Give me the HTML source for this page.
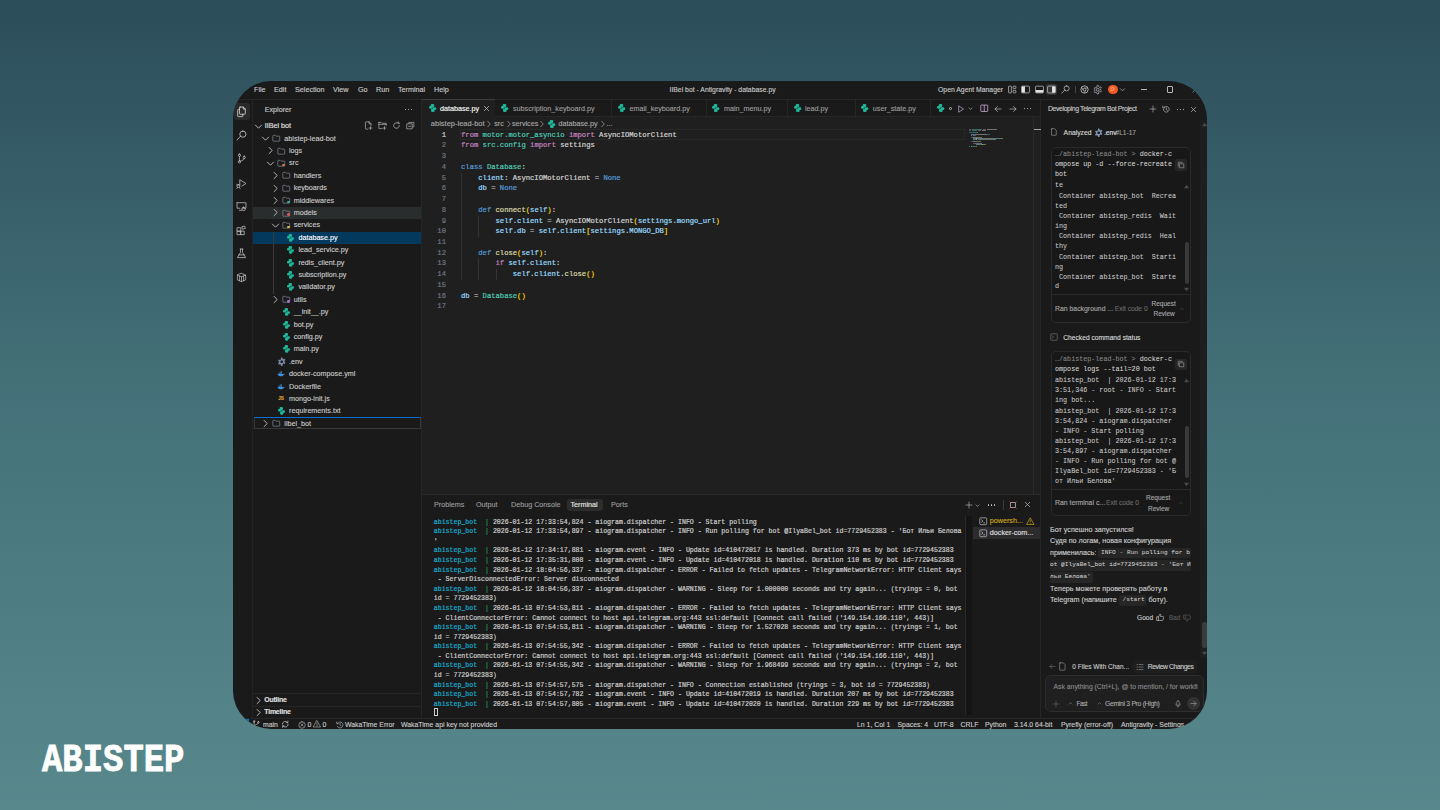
<!DOCTYPE html><html><head><meta charset="utf-8"><style>
*{margin:0;padding:0;box-sizing:border-box}
html,body{width:1440px;height:810px;overflow:hidden}
body{background:linear-gradient(180deg,#2b4d5a 0%,#45727a 50%,#58888c 100%);position:relative;font-family:"Liberation Sans", sans-serif}
.win{position:absolute;left:0;top:0;width:1440px;height:810px;clip-path:inset(81px 233px 81px 233px round 38px);}
.s{position:absolute;white-space:pre;font-family:"Liberation Sans", sans-serif;-webkit-text-stroke:0.12px currentColor}
.m{position:absolute;white-space:pre;font-family:"Liberation Mono", monospace;-webkit-text-stroke:0.2px currentColor}
.r{position:absolute}
svg.i{position:absolute;overflow:visible}
</style></head><body>
<div class="win">
<div class="r" style="left:233px;top:81px;width:974px;height:648px;background:#1a1a1a;"></div>
<div class="r" style="left:422px;top:116px;width:618px;height:378px;background:#1f1f1f;"></div>
<div class="r" style="left:422px;top:99px;width:73px;height:17px;background:#1f1f1f;"></div>
<div class="r" style="left:233px;top:99px;width:974px;height:1px;background:#262626;"></div>
<div class="r" style="left:422px;top:99px;width:72.6px;height:1px;background:#3d3d3d;"></div>
<div class="r" style="left:495px;top:116px;width:545px;height:1px;background:#262626;"></div>
<div class="r" style="left:252px;top:99px;width:1px;height:619px;background:#232323;"></div>
<div class="r" style="left:421px;top:99px;width:1px;height:619px;background:#262626;"></div>
<div class="r" style="left:1040px;top:99px;width:1px;height:619px;background:#262626;"></div>
<div class="r" style="left:422px;top:494px;width:618px;height:1px;background:#2a2a2a;"></div>
<div class="r" style="left:233px;top:718px;width:974px;height:1px;background:#262626;"></div>
<div class="s" style="left:254px;top:83.60px;font-size:7.2px;line-height:12px;color:#cccccc;">File</div>
<div class="s" style="left:274px;top:83.60px;font-size:7.2px;line-height:12px;color:#cccccc;">Edit</div>
<div class="s" style="left:295px;top:83.60px;font-size:7.2px;line-height:12px;color:#cccccc;">Selection</div>
<div class="s" style="left:333px;top:83.60px;font-size:7.2px;line-height:12px;color:#cccccc;">View</div>
<div class="s" style="left:358px;top:83.60px;font-size:7.2px;line-height:12px;color:#cccccc;">Go</div>
<div class="s" style="left:376px;top:83.60px;font-size:7.2px;line-height:12px;color:#cccccc;">Run</div>
<div class="s" style="left:398px;top:83.60px;font-size:7.2px;line-height:12px;color:#cccccc;">Terminal</div>
<div class="s" style="left:434px;top:83.60px;font-size:7.2px;line-height:12px;color:#cccccc;">Help</div>
<div class="s" style="left:669.5px;top:83.60px;font-size:6.85px;line-height:12px;color:#cccccc;">IIBel bot - Antigravity - database.py</div>
<div class="s" style="left:938px;top:83.60px;font-size:6.85px;line-height:12px;color:#cccccc;">Open Agent Manager</div>
<svg class="i" style="left:1007.5px;top:84.9px;" width="9" height="9" viewBox="0 0 16 16"><rect x="1" y="2" width="5" height="12" rx="1" fill="none" stroke="#c5c5c5" stroke-width="1.3"/><rect x="9" y="2" width="5" height="4.5" rx="1" fill="none" stroke="#c5c5c5" stroke-width="1.3"/><rect x="9" y="9.5" width="5" height="4.5" rx="1" fill="none" stroke="#c5c5c5" stroke-width="1.3"/></svg>
<svg class="i" style="left:1020.8px;top:85.2px;" width="9" height="9" viewBox="0 0 16 16"><rect x="1" y="2" width="14" height="12" rx="1.5" fill="none" stroke="#c5c5c5" stroke-width="1.3"/><rect x="1.5" y="2.5" width="5.5" height="11" fill="#e5e5e5"/></svg>
<svg class="i" style="left:1034.5px;top:85.2px;" width="9" height="9" viewBox="0 0 16 16"><rect x="1" y="2" width="14" height="12" rx="1.5" fill="none" stroke="#c5c5c5" stroke-width="1.3"/><rect x="1.5" y="9" width="13" height="4.5" fill="#e5e5e5"/></svg>
<div class="r" style="left:1046px;top:83.5px;width:11px;height:11.5px;background:#333333;border-radius:2px"></div>
<svg class="i" style="left:1047.0px;top:85.2px;" width="9" height="9" viewBox="0 0 16 16"><rect x="1" y="2" width="14" height="12" rx="1.5" fill="none" stroke="#c5c5c5" stroke-width="1.3"/><rect x="9" y="2.5" width="5.5" height="11" fill="#e5e5e5"/></svg>
<svg class="i" style="left:1061.2px;top:85.0px;" width="9" height="9" viewBox="0 0 16 16"><path d="M10 1.5a4.5 4.5 0 1 1 0 9a4.5 4.5 0 1 1 0-9zM6.8 8.8L1.5 14.5" fill="none" stroke="#c5c5c5" stroke-width="1.3" stroke-linecap="round" stroke-linejoin="round" /></svg>
<div class="r" style="left:1075.3px;top:86px;width:0.8px;height:7px;background:#444;"></div>
<svg class="i" style="left:1079.5px;top:84.8px;" width="9" height="9" viewBox="0 0 16 16"><circle cx="8" cy="8" r="6.5" fill="none" stroke="#c5c5c5" stroke-width="1.4"/><circle cx="8" cy="8" r="2.6" fill="none" stroke="#c5c5c5" stroke-width="1.3"/><path d="M8 5.4h6M5.8 9.3L2.8 4M10.2 9.3L7 14.4" stroke="#c5c5c5" stroke-width="1.2"/></svg>
<svg class="i" style="left:1092.75px;top:84.55px;" width="9.5" height="9.5" viewBox="0 0 16 16"><circle cx="8" cy="8" r="2.4" fill="none" stroke="#b5b5c5" stroke-width="1.3"/><path d="M6.8 1h2.4l.4 1.9 1.6.9 1.8-.7 1.2 2.1-1.4 1.3v1.9l1.4 1.3-1.2 2.1-1.8-.7-1.6.9L9.2 15H6.8l-.4-1.9-1.6-.9-1.8.7-1.2-2.1 1.4-1.3V7.6L1.8 6.3 3 4.2l1.8.7 1.6-.9z" fill="none" stroke="#b5b5c5" stroke-width="1.2"/></svg>
<div class="r" style="left:1108px;top:84.6px;width:9.5px;height:9.5px;border-radius:50%;background:#f05a22"></div>
<svg class="i" style="left:1110.3px;top:86.9px;" width="5" height="5" viewBox="0 0 16 16"><path d="M3 6a5 5 0 1 1 5 5H3" fill="none" stroke="#ffd0b8" stroke-width="2" stroke-linecap="round" stroke-linejoin="round" /></svg>
<svg class="i" style="left:1118.8px;top:86.1px;" width="7" height="7" viewBox="0 0 16 16"><path d="M3 6l5 5l5-5" fill="none" stroke="#c5c5c5" stroke-width="1.4" stroke-linecap="round" stroke-linejoin="round" /></svg>
<div class="r" style="left:1140.8px;top:89px;width:6.2px;height:0.9px;background:#b8b8b8;"></div>
<div class="r" style="left:1167px;top:86.4px;width:6px;height:6.2px;background:transparent;border:0.9px solid #b8b8b8;border-radius:1px"></div>
<svg class="i" style="left:1191.5px;top:86.0px;" width="7" height="7" viewBox="0 0 16 16"><path d="M2 2l12 12M14 2L2 14" fill="none" stroke="#c5c5c5" stroke-width="1.3" stroke-linecap="round" stroke-linejoin="round" /></svg>
<div class="r" style="left:233.9px;top:103.2px;width:16px;height:16.6px;background:#2a2a2a;border-radius:3px"></div>
<svg class="i" style="left:236.0px;top:106.0px;" width="11" height="11" viewBox="0 0 16 16"><path d="M6 1.5h4.5l3 3V11a1 1 0 0 1-1 1H6a1 1 0 0 1-1-1V2.5a1 1 0 0 1 1-1zM10.5 1.5v3h3M5 5H3.5a1 1 0 0 0-1 1v8.5a1 1 0 0 0 1 1H9a1 1 0 0 0 1-1V12" fill="none" stroke="#d8d8d8" stroke-width="1.2" stroke-linecap="round" stroke-linejoin="round" /></svg>
<svg class="i" style="left:236.0px;top:129.5px;" width="11" height="11" viewBox="0 0 16 16"><path d="M10 1.5a4.5 4.5 0 1 1 0 9a4.5 4.5 0 1 1 0-9zM6.8 8.8L1.5 14.5" fill="none" stroke="#c5c5c5" stroke-width="1.2" stroke-linecap="round" stroke-linejoin="round" /></svg>
<svg class="i" style="left:236.0px;top:153.1px;" width="11" height="11" viewBox="0 0 16 16"><path d="M5 1.5a1.7 1.7 0 1 1 0 3.4a1.7 1.7 0 1 1 0-3.4zM5 11.1a1.7 1.7 0 1 1 0 3.4a1.7 1.7 0 1 1 0-3.4zM12 4.6a1.7 1.7 0 1 1 0 3.4a1.7 1.7 0 1 1 0-3.4zM5 4.9v6.2M12 8c0 2.5-3 2.5-6.2 4" fill="none" stroke="#c5c5c5" stroke-width="1.1" stroke-linecap="round" stroke-linejoin="round" /></svg>
<svg class="i" style="left:236.0px;top:177.5px;" width="11" height="11" viewBox="0 0 16 16"><path d="M5.5 8.5V2.5l9 5.5l-6 3.7M3.5 9.5a2.2 2.2 0 1 1 0 4.4a2.2 2.2 0 1 1 0-4.4zM1 9l1.2 1.2M6 9L4.8 10.2M1 15l1.2-.8M6 15l-1.2-.8" fill="none" stroke="#c5c5c5" stroke-width="1.1" stroke-linecap="round" stroke-linejoin="round" /></svg>
<svg class="i" style="left:236.0px;top:201.2px;" width="11" height="11" viewBox="0 0 16 16"><path d="M1.5 2.5h13v8h-5M1.5 2.5v8h4M5 13.5h3M11 9a2.5 2.5 0 1 1 0 5a2.5 2.5 0 1 1 0-5z" fill="none" stroke="#c5c5c5" stroke-width="1.1" stroke-linecap="round" stroke-linejoin="round" /></svg>
<svg class="i" style="left:236.0px;top:224.7px;" width="11" height="11" viewBox="0 0 16 16"><path d="M2 4h5v5H2zM2 9h5v5H2zM7 9h5v5H7zM9 2.5l3.5-1 1 3.5-3.5 1z" fill="none" stroke="#c5c5c5" stroke-width="1.1" stroke-linecap="round" stroke-linejoin="round" /></svg>
<svg class="i" style="left:236.0px;top:248.1px;" width="11" height="11" viewBox="0 0 16 16"><path d="M6 1.5h4M6.5 1.5v5L2 14h12l-4.5-7.5v-5M4 10h8" fill="none" stroke="#c5c5c5" stroke-width="1.1" stroke-linecap="round" stroke-linejoin="round" /></svg>
<svg class="i" style="left:236.0px;top:271.5px;" width="11" height="11" viewBox="0 0 16 16"><path d="M8 2l6 2.5v7L8 14l-6-2.5v-7zM2 4.5L8 7l6-2.5M8 7v7M5 5.8v6.8M11 5.8v6.8" fill="none" stroke="#c5c5c5" stroke-width="1.0" stroke-linecap="round" stroke-linejoin="round" /></svg>
<div class="s" style="left:264.7px;top:103.60px;font-size:7.2px;line-height:12px;color:#cccccc;">Explorer</div>
<div class="r" style="left:404.5px;top:108.6px;width:1.4px;height:1.4px;border-radius:50%;background:#cccccc"></div>
<div class="r" style="left:407.7px;top:108.6px;width:1.4px;height:1.4px;border-radius:50%;background:#cccccc"></div>
<div class="r" style="left:410.9px;top:108.6px;width:1.4px;height:1.4px;border-radius:50%;background:#cccccc"></div>
<div class="r" style="left:253px;top:206.89999999999998px;width:168px;height:12.1px;background:#2a2d2e;"></div>
<div class="r" style="left:253px;top:231.7px;width:168px;height:12.1px;background:#04395e;"></div>
<div class="r" style="left:253.5px;top:417px;width:167.8px;height:12.3px;background:transparent;border:1px solid #383838;border-top:1.3px solid #0a6fd0"></div>
<div class="r" style="left:272.7px;top:231.5px;width:0.8px;height:62.2px;background:#3a3a3a;"></div>
<svg class="i" style="left:254.3px;top:121.8px;" width="9" height="9" viewBox="0 0 16 16"><path d="M2.5 5.5l5.5 5.5l5.5-5.5" fill="none" stroke="#c5c5c5" stroke-width="1.6" stroke-linecap="round" stroke-linejoin="round" /></svg>
<div class="s" style="left:264.7px;top:120.10px;font-size:7.2px;line-height:12px;color:#e0e0e0;-webkit-text-stroke:0.15px #e0e0e0">IIBel bot</div>
<svg class="i" style="left:261.2px;top:134.2px;" width="9" height="9" viewBox="0 0 16 16"><path d="M2.5 5.5l5.5 5.5l5.5-5.5" fill="none" stroke="#c5c5c5" stroke-width="1.6" stroke-linecap="round" stroke-linejoin="round" /></svg>
<svg class="i" style="left:272.45px;top:134.25px;" width="8.5" height="8.5" viewBox="0 0 16 16"><path d="M1.5 3.5a1 1 0 0 1 1-1h3.5l1.5 1.5h6a1 1 0 0 1 1 1v7.5a1 1 0 0 1-1 1h-11a1 1 0 0 1-1-1z" fill="none" stroke="#8f96a3" stroke-width="1.2" stroke-linecap="round" stroke-linejoin="round" /></svg>
<div class="s" style="left:284.3px;top:132.50px;font-size:7.2px;line-height:12px;color:#cccccc;">abistep-lead-bot</div>
<svg class="i" style="left:265.9px;top:146.4px;" width="9" height="9" viewBox="0 0 16 16"><path d="M5.5 2.5l5.5 5.5l-5.5 5.5" fill="none" stroke="#c5c5c5" stroke-width="1.6" stroke-linecap="round" stroke-linejoin="round" /></svg>
<svg class="i" style="left:277.15px;top:146.65px;" width="8.5" height="8.5" viewBox="0 0 16 16"><path d="M1.5 3.5a1 1 0 0 1 1-1h3.5l1.5 1.5h6a1 1 0 0 1 1 1v7.5a1 1 0 0 1-1 1h-11a1 1 0 0 1-1-1z" fill="none" stroke="#8f96a3" stroke-width="1.2" stroke-linecap="round" stroke-linejoin="round" /></svg>
<div class="s" style="left:289.0px;top:144.90px;font-size:7.2px;line-height:12px;color:#cccccc;">logs</div>
<svg class="i" style="left:265.9px;top:159.0px;" width="9" height="9" viewBox="0 0 16 16"><path d="M2.5 5.5l5.5 5.5l5.5-5.5" fill="none" stroke="#c5c5c5" stroke-width="1.6" stroke-linecap="round" stroke-linejoin="round" /></svg>
<svg class="i" style="left:277.15px;top:159.05px;" width="8.5" height="8.5" viewBox="0 0 16 16"><path d="M1.5 3.5a1 1 0 0 1 1-1h3.5l1.5 1.5h6a1 1 0 0 1 1 1v7.5a1 1 0 0 1-1 1h-11a1 1 0 0 1-1-1z" fill="none" stroke="#8f96a3" stroke-width="1.2" stroke-linecap="round" stroke-linejoin="round" /></svg>
<div class="r" style="left:282.4px;top:163.5px;width:2.8px;height:2.8px;border-radius:50%;background:#e06c3c"></div>
<div class="s" style="left:289.0px;top:157.30px;font-size:7.2px;line-height:12px;color:#cccccc;">src</div>
<svg class="i" style="left:270.6px;top:171.2px;" width="9" height="9" viewBox="0 0 16 16"><path d="M5.5 2.5l5.5 5.5l-5.5 5.5" fill="none" stroke="#c5c5c5" stroke-width="1.6" stroke-linecap="round" stroke-linejoin="round" /></svg>
<svg class="i" style="left:281.85px;top:171.45px;" width="8.5" height="8.5" viewBox="0 0 16 16"><path d="M1.5 3.5a1 1 0 0 1 1-1h3.5l1.5 1.5h6a1 1 0 0 1 1 1v7.5a1 1 0 0 1-1 1h-11a1 1 0 0 1-1-1z" fill="none" stroke="#8f96a3" stroke-width="1.2" stroke-linecap="round" stroke-linejoin="round" /></svg>
<div class="s" style="left:293.70000000000005px;top:169.70px;font-size:7.2px;line-height:12px;color:#cccccc;">handlers</div>
<svg class="i" style="left:270.6px;top:183.6px;" width="9" height="9" viewBox="0 0 16 16"><path d="M5.5 2.5l5.5 5.5l-5.5 5.5" fill="none" stroke="#c5c5c5" stroke-width="1.6" stroke-linecap="round" stroke-linejoin="round" /></svg>
<svg class="i" style="left:281.85px;top:183.85px;" width="8.5" height="8.5" viewBox="0 0 16 16"><path d="M1.5 3.5a1 1 0 0 1 1-1h3.5l1.5 1.5h6a1 1 0 0 1 1 1v7.5a1 1 0 0 1-1 1h-11a1 1 0 0 1-1-1z" fill="none" stroke="#8f96a3" stroke-width="1.2" stroke-linecap="round" stroke-linejoin="round" /></svg>
<div class="s" style="left:293.70000000000005px;top:182.10px;font-size:7.2px;line-height:12px;color:#cccccc;">keyboards</div>
<svg class="i" style="left:270.6px;top:196.0px;" width="9" height="9" viewBox="0 0 16 16"><path d="M5.5 2.5l5.5 5.5l-5.5 5.5" fill="none" stroke="#c5c5c5" stroke-width="1.6" stroke-linecap="round" stroke-linejoin="round" /></svg>
<svg class="i" style="left:281.85px;top:196.25px;" width="8.5" height="8.5" viewBox="0 0 16 16"><path d="M1.5 3.5a1 1 0 0 1 1-1h3.5l1.5 1.5h6a1 1 0 0 1 1 1v7.5a1 1 0 0 1-1 1h-11a1 1 0 0 1-1-1z" fill="none" stroke="#8f96a3" stroke-width="1.2" stroke-linecap="round" stroke-linejoin="round" /></svg>
<div class="r" style="left:287.1px;top:200.7px;width:2.8px;height:2.8px;border-radius:50%;background:#2bb5a0"></div>
<div class="s" style="left:293.70000000000005px;top:194.50px;font-size:7.2px;line-height:12px;color:#cccccc;">middlewares</div>
<svg class="i" style="left:270.6px;top:208.39999999999998px;" width="9" height="9" viewBox="0 0 16 16"><path d="M5.5 2.5l5.5 5.5l-5.5 5.5" fill="none" stroke="#c5c5c5" stroke-width="1.6" stroke-linecap="round" stroke-linejoin="round" /></svg>
<svg class="i" style="left:281.85px;top:208.64999999999998px;" width="8.5" height="8.5" viewBox="0 0 16 16"><path d="M1.5 3.5a1 1 0 0 1 1-1h3.5l1.5 1.5h6a1 1 0 0 1 1 1v7.5a1 1 0 0 1-1 1h-11a1 1 0 0 1-1-1z" fill="none" stroke="#8f96a3" stroke-width="1.2" stroke-linecap="round" stroke-linejoin="round" /></svg>
<div class="r" style="left:287.1px;top:213.09999999999997px;width:2.8px;height:2.8px;border-radius:50%;background:#e05252"></div>
<div class="s" style="left:293.70000000000005px;top:206.90px;font-size:7.2px;line-height:12px;color:#cccccc;">models</div>
<svg class="i" style="left:270.6px;top:221.0px;" width="9" height="9" viewBox="0 0 16 16"><path d="M2.5 5.5l5.5 5.5l5.5-5.5" fill="none" stroke="#c5c5c5" stroke-width="1.6" stroke-linecap="round" stroke-linejoin="round" /></svg>
<svg class="i" style="left:281.85px;top:221.05px;" width="8.5" height="8.5" viewBox="0 0 16 16"><path d="M1.5 3.5a1 1 0 0 1 1-1h3.5l1.5 1.5h6a1 1 0 0 1 1 1v7.5a1 1 0 0 1-1 1h-11a1 1 0 0 1-1-1z" fill="none" stroke="#8f96a3" stroke-width="1.2" stroke-linecap="round" stroke-linejoin="round" /></svg>
<div class="r" style="left:287.1px;top:225.5px;width:2.8px;height:2.8px;border-radius:50%;background:#e8b43a"></div>
<div class="s" style="left:293.70000000000005px;top:219.30px;font-size:7.2px;line-height:12px;color:#cccccc;">services</div>
<svg class="i" style="left:287.3px;top:233.85px;" width="7" height="7.700000000000001" viewBox="0 0 10 11"><g fill="#20b598"><rect x="2.3" y="0" width="4.9" height="4.4" rx="1.6"/><rect x="0" y="2.8" width="4.9" height="3.6" rx="1.5"/><rect x="2.3" y="2.8" width="2.6" height="1.6"/><rect x="5.1" y="4.6" width="4.9" height="3.6" rx="1.5"/><rect x="2.8" y="6.6" width="4.9" height="4.4" rx="1.6"/><rect x="5.1" y="6.6" width="2.6" height="1.6"/></g></svg>
<div class="s" style="left:298.40000000000003px;top:231.70px;font-size:7.2px;line-height:12px;color:#ffffff;">database.py</div>
<svg class="i" style="left:287.3px;top:246.25px;" width="7" height="7.700000000000001" viewBox="0 0 10 11"><g fill="#20b598"><rect x="2.3" y="0" width="4.9" height="4.4" rx="1.6"/><rect x="0" y="2.8" width="4.9" height="3.6" rx="1.5"/><rect x="2.3" y="2.8" width="2.6" height="1.6"/><rect x="5.1" y="4.6" width="4.9" height="3.6" rx="1.5"/><rect x="2.8" y="6.6" width="4.9" height="4.4" rx="1.6"/><rect x="5.1" y="6.6" width="2.6" height="1.6"/></g></svg>
<div class="s" style="left:298.40000000000003px;top:244.10px;font-size:7.2px;line-height:12px;color:#cccccc;">lead_service.py</div>
<svg class="i" style="left:287.3px;top:258.65px;" width="7" height="7.700000000000001" viewBox="0 0 10 11"><g fill="#20b598"><rect x="2.3" y="0" width="4.9" height="4.4" rx="1.6"/><rect x="0" y="2.8" width="4.9" height="3.6" rx="1.5"/><rect x="2.3" y="2.8" width="2.6" height="1.6"/><rect x="5.1" y="4.6" width="4.9" height="3.6" rx="1.5"/><rect x="2.8" y="6.6" width="4.9" height="4.4" rx="1.6"/><rect x="5.1" y="6.6" width="2.6" height="1.6"/></g></svg>
<div class="s" style="left:298.40000000000003px;top:256.50px;font-size:7.2px;line-height:12px;color:#cccccc;">redis_client.py</div>
<svg class="i" style="left:287.3px;top:271.04999999999995px;" width="7" height="7.700000000000001" viewBox="0 0 10 11"><g fill="#20b598"><rect x="2.3" y="0" width="4.9" height="4.4" rx="1.6"/><rect x="0" y="2.8" width="4.9" height="3.6" rx="1.5"/><rect x="2.3" y="2.8" width="2.6" height="1.6"/><rect x="5.1" y="4.6" width="4.9" height="3.6" rx="1.5"/><rect x="2.8" y="6.6" width="4.9" height="4.4" rx="1.6"/><rect x="5.1" y="6.6" width="2.6" height="1.6"/></g></svg>
<div class="s" style="left:298.40000000000003px;top:268.90px;font-size:7.2px;line-height:12px;color:#cccccc;">subscription.py</div>
<svg class="i" style="left:287.3px;top:283.45px;" width="7" height="7.700000000000001" viewBox="0 0 10 11"><g fill="#20b598"><rect x="2.3" y="0" width="4.9" height="4.4" rx="1.6"/><rect x="0" y="2.8" width="4.9" height="3.6" rx="1.5"/><rect x="2.3" y="2.8" width="2.6" height="1.6"/><rect x="5.1" y="4.6" width="4.9" height="3.6" rx="1.5"/><rect x="2.8" y="6.6" width="4.9" height="4.4" rx="1.6"/><rect x="5.1" y="6.6" width="2.6" height="1.6"/></g></svg>
<div class="s" style="left:298.40000000000003px;top:281.30px;font-size:7.2px;line-height:12px;color:#cccccc;">validator.py</div>
<svg class="i" style="left:270.6px;top:295.2px;" width="9" height="9" viewBox="0 0 16 16"><path d="M5.5 2.5l5.5 5.5l-5.5 5.5" fill="none" stroke="#c5c5c5" stroke-width="1.6" stroke-linecap="round" stroke-linejoin="round" /></svg>
<svg class="i" style="left:281.85px;top:295.45px;" width="8.5" height="8.5" viewBox="0 0 16 16"><path d="M1.5 3.5a1 1 0 0 1 1-1h3.5l1.5 1.5h6a1 1 0 0 1 1 1v7.5a1 1 0 0 1-1 1h-11a1 1 0 0 1-1-1z" fill="none" stroke="#8f96a3" stroke-width="1.2" stroke-linecap="round" stroke-linejoin="round" /></svg>
<div class="r" style="left:287.1px;top:299.9px;width:2.8px;height:2.8px;border-radius:50%;background:#b36ad9"></div>
<div class="s" style="left:293.70000000000005px;top:293.70px;font-size:7.2px;line-height:12px;color:#cccccc;">utils</div>
<svg class="i" style="left:282.6px;top:308.25px;" width="7" height="7.700000000000001" viewBox="0 0 10 11"><g fill="#20b598"><rect x="2.3" y="0" width="4.9" height="4.4" rx="1.6"/><rect x="0" y="2.8" width="4.9" height="3.6" rx="1.5"/><rect x="2.3" y="2.8" width="2.6" height="1.6"/><rect x="5.1" y="4.6" width="4.9" height="3.6" rx="1.5"/><rect x="2.8" y="6.6" width="4.9" height="4.4" rx="1.6"/><rect x="5.1" y="6.6" width="2.6" height="1.6"/></g></svg>
<div class="s" style="left:293.70000000000005px;top:306.10px;font-size:7.2px;line-height:12px;color:#cccccc;">__init__.py</div>
<svg class="i" style="left:282.6px;top:320.65px;" width="7" height="7.700000000000001" viewBox="0 0 10 11"><g fill="#20b598"><rect x="2.3" y="0" width="4.9" height="4.4" rx="1.6"/><rect x="0" y="2.8" width="4.9" height="3.6" rx="1.5"/><rect x="2.3" y="2.8" width="2.6" height="1.6"/><rect x="5.1" y="4.6" width="4.9" height="3.6" rx="1.5"/><rect x="2.8" y="6.6" width="4.9" height="4.4" rx="1.6"/><rect x="5.1" y="6.6" width="2.6" height="1.6"/></g></svg>
<div class="s" style="left:293.70000000000005px;top:318.50px;font-size:7.2px;line-height:12px;color:#cccccc;">bot.py</div>
<svg class="i" style="left:282.6px;top:333.04999999999995px;" width="7" height="7.700000000000001" viewBox="0 0 10 11"><g fill="#20b598"><rect x="2.3" y="0" width="4.9" height="4.4" rx="1.6"/><rect x="0" y="2.8" width="4.9" height="3.6" rx="1.5"/><rect x="2.3" y="2.8" width="2.6" height="1.6"/><rect x="5.1" y="4.6" width="4.9" height="3.6" rx="1.5"/><rect x="2.8" y="6.6" width="4.9" height="4.4" rx="1.6"/><rect x="5.1" y="6.6" width="2.6" height="1.6"/></g></svg>
<div class="s" style="left:293.70000000000005px;top:330.90px;font-size:7.2px;line-height:12px;color:#cccccc;">config.py</div>
<svg class="i" style="left:282.6px;top:345.45px;" width="7" height="7.700000000000001" viewBox="0 0 10 11"><g fill="#20b598"><rect x="2.3" y="0" width="4.9" height="4.4" rx="1.6"/><rect x="0" y="2.8" width="4.9" height="3.6" rx="1.5"/><rect x="2.3" y="2.8" width="2.6" height="1.6"/><rect x="5.1" y="4.6" width="4.9" height="3.6" rx="1.5"/><rect x="2.8" y="6.6" width="4.9" height="4.4" rx="1.6"/><rect x="5.1" y="6.6" width="2.6" height="1.6"/></g></svg>
<div class="s" style="left:293.70000000000005px;top:343.30px;font-size:7.2px;line-height:12px;color:#cccccc;">main.py</div>
<svg class="i" style="left:276.65px;top:356.95px;" width="9.5" height="9.5" viewBox="0 0 16 16"><circle cx="8" cy="8" r="2.5" fill="#1a1a1a"/><path d="M6.8 1h2.4l.4 1.9 1.6.9 1.8-.7 1.2 2.1-1.4 1.3v1.9l1.4 1.3-1.2 2.1-1.8-.7-1.6.9L9.2 15H6.8l-.4-1.9-1.6-.9-1.8.7-1.2-2.1 1.4-1.3V7.6L1.8 6.3 3 4.2l1.8.7 1.6-.9z" fill="#7c8aa5"/><circle cx="8" cy="8" r="2.3" fill="#1a1a1a"/></svg>
<div class="s" style="left:289.0px;top:355.70px;font-size:7.2px;line-height:12px;color:#cccccc;">.env</div>
<svg class="i" style="left:277.4px;top:370.1px;" width="8" height="8" viewBox="0 0 16 16"><path d="M1 8h12.5c.6-1 1.3-1.3 1.8-1.2-.3 1.3-1 2.4-2 3.1C12 11.6 9.5 12.8 6 12.3 3.2 11.9 1.6 10.3 1 8z" fill="#3d8fe0"/><path d="M3 5.5h2v2H3zM5.5 5.5h2v2h-2zM8 5.5h2v2H8zM5.5 3h2v2h-2zM8 3h2v2H8z" fill="#3d8fe0"/></svg>
<div class="s" style="left:289.0px;top:368.10px;font-size:7.2px;line-height:12px;color:#cccccc;">docker-compose.yml</div>
<svg class="i" style="left:277.4px;top:382.5px;" width="8" height="8" viewBox="0 0 16 16"><path d="M1 8h12.5c.6-1 1.3-1.3 1.8-1.2-.3 1.3-1 2.4-2 3.1C12 11.6 9.5 12.8 6 12.3 3.2 11.9 1.6 10.3 1 8z" fill="#3d8fe0"/><path d="M3 5.5h2v2H3zM5.5 5.5h2v2h-2zM8 5.5h2v2H8zM5.5 3h2v2h-2zM8 3h2v2H8z" fill="#3d8fe0"/></svg>
<div class="s" style="left:289.0px;top:380.50px;font-size:7.2px;line-height:12px;color:#cccccc;">Dockerfile</div>
<div class="s" style="left:278.2px;top:392.90px;font-size:4.6px;line-height:12px;color:#e0a530;font-weight:bold">JS</div>
<div class="s" style="left:289.0px;top:392.90px;font-size:7.2px;line-height:12px;color:#cccccc;">mongo-init.js</div>
<svg class="i" style="left:277.9px;top:407.44999999999993px;" width="7" height="7.700000000000001" viewBox="0 0 10 11"><g fill="#20b598"><rect x="2.3" y="0" width="4.9" height="4.4" rx="1.6"/><rect x="0" y="2.8" width="4.9" height="3.6" rx="1.5"/><rect x="2.3" y="2.8" width="2.6" height="1.6"/><rect x="5.1" y="4.6" width="4.9" height="3.6" rx="1.5"/><rect x="2.8" y="6.6" width="4.9" height="4.4" rx="1.6"/><rect x="5.1" y="6.6" width="2.6" height="1.6"/></g></svg>
<div class="s" style="left:289.0px;top:405.30px;font-size:7.2px;line-height:12px;color:#cccccc;">requirements.txt</div>
<svg class="i" style="left:261.2px;top:419.20000000000005px;" width="9" height="9" viewBox="0 0 16 16"><path d="M5.5 2.5l5.5 5.5l-5.5 5.5" fill="none" stroke="#c5c5c5" stroke-width="1.6" stroke-linecap="round" stroke-linejoin="round" /></svg>
<svg class="i" style="left:272.45px;top:419.45000000000005px;" width="8.5" height="8.5" viewBox="0 0 16 16"><path d="M1.5 3.5a1 1 0 0 1 1-1h3.5l1.5 1.5h6a1 1 0 0 1 1 1v7.5a1 1 0 0 1-1 1h-11a1 1 0 0 1-1-1z" fill="none" stroke="#8f96a3" stroke-width="1.2" stroke-linecap="round" stroke-linejoin="round" /></svg>
<div class="s" style="left:284.3px;top:417.70px;font-size:7.2px;line-height:12px;color:#cccccc;">ilbel_bot</div>
<svg class="i" style="left:364.0px;top:120.8px;" width="9" height="9" viewBox="0 0 16 16"><path d="M9 1.5H3.5a1 1 0 0 0-1 1v11a1 1 0 0 0 1 1H7M9 1.5l3.5 3.5V8M9 1.5V5h3.5M11.5 10v5M9 12.5h5" fill="none" stroke="#c5c5c5" stroke-width="1.1" stroke-linecap="round" stroke-linejoin="round" /></svg>
<svg class="i" style="left:378.0px;top:120.8px;" width="9" height="9" viewBox="0 0 16 16"><path d="M1.5 2.5h4l1.5 1.5h7.5v4M1.5 2.5v11h6M1.5 6h13M11.5 10v5M9 12.5h5" fill="none" stroke="#c5c5c5" stroke-width="1.1" stroke-linecap="round" stroke-linejoin="round" /></svg>
<svg class="i" style="left:391.5px;top:120.8px;" width="9" height="9" viewBox="0 0 16 16"><path d="M13 8a5 5 0 1 1-2-4M11 1.5V4h2.5" fill="none" stroke="#c5c5c5" stroke-width="1.2" stroke-linecap="round" stroke-linejoin="round" /></svg>
<svg class="i" style="left:405.5px;top:120.8px;" width="9" height="9" viewBox="0 0 16 16"><path d="M5 4V2.5h9v8h-2M2 5h9v9H2zM4.5 9.5h4" fill="none" stroke="#c5c5c5" stroke-width="1.1" stroke-linecap="round" stroke-linejoin="round" /></svg>
<div class="r" style="left:253px;top:693px;width:168px;height:1px;background:#262626;"></div>
<div class="r" style="left:253px;top:705.5px;width:168px;height:1px;background:#262626;"></div>
<svg class="i" style="left:254.3px;top:695.5px;" width="9" height="9" viewBox="0 0 16 16"><path d="M5.5 2.5l5.5 5.5l-5.5 5.5" fill="none" stroke="#c5c5c5" stroke-width="1.6" stroke-linecap="round" stroke-linejoin="round" /></svg>
<div class="s" style="left:264.3px;top:694.20px;font-size:7.0px;line-height:12px;color:#e0e0e0;font-weight:bold;letter-spacing:-0.25px">Outline</div>
<svg class="i" style="left:254.3px;top:707.5px;" width="9" height="9" viewBox="0 0 16 16"><path d="M5.5 2.5l5.5 5.5l-5.5 5.5" fill="none" stroke="#c5c5c5" stroke-width="1.6" stroke-linecap="round" stroke-linejoin="round" /></svg>
<div class="s" style="left:264.3px;top:706.20px;font-size:7.0px;line-height:12px;color:#e0e0e0;font-weight:bold;letter-spacing:-0.25px">Timeline</div>
<svg class="i" style="left:428.85px;top:104.285px;" width="7.3" height="8.030000000000001" viewBox="0 0 10 11"><g fill="#20b598"><rect x="2.3" y="0" width="4.9" height="4.4" rx="1.6"/><rect x="0" y="2.8" width="4.9" height="3.6" rx="1.5"/><rect x="2.3" y="2.8" width="2.6" height="1.6"/><rect x="5.1" y="4.6" width="4.9" height="3.6" rx="1.5"/><rect x="2.8" y="6.6" width="4.9" height="4.4" rx="1.6"/><rect x="5.1" y="6.6" width="2.6" height="1.6"/></g></svg>
<div class="s" style="left:440px;top:102.80px;font-size:7.2px;line-height:12px;color:#ffffff;">database.py</div>
<svg class="i" style="left:501.15000000000003px;top:104.285px;" width="7.3" height="8.030000000000001" viewBox="0 0 10 11"><g fill="#20b598"><rect x="2.3" y="0" width="4.9" height="4.4" rx="1.6"/><rect x="0" y="2.8" width="4.9" height="3.6" rx="1.5"/><rect x="2.3" y="2.8" width="2.6" height="1.6"/><rect x="5.1" y="4.6" width="4.9" height="3.6" rx="1.5"/><rect x="2.8" y="6.6" width="4.9" height="4.4" rx="1.6"/><rect x="5.1" y="6.6" width="2.6" height="1.6"/></g></svg>
<div class="s" style="left:513px;top:102.80px;font-size:7.2px;line-height:12px;color:#9d9d9d;">subscription_keyboard.py</div>
<svg class="i" style="left:617.85px;top:104.285px;" width="7.3" height="8.030000000000001" viewBox="0 0 10 11"><g fill="#20b598"><rect x="2.3" y="0" width="4.9" height="4.4" rx="1.6"/><rect x="0" y="2.8" width="4.9" height="3.6" rx="1.5"/><rect x="2.3" y="2.8" width="2.6" height="1.6"/><rect x="5.1" y="4.6" width="4.9" height="3.6" rx="1.5"/><rect x="2.8" y="6.6" width="4.9" height="4.4" rx="1.6"/><rect x="5.1" y="6.6" width="2.6" height="1.6"/></g></svg>
<div class="s" style="left:629.5px;top:102.80px;font-size:7.2px;line-height:12px;color:#9d9d9d;">email_keyboard.py</div>
<svg class="i" style="left:712.35px;top:104.285px;" width="7.3" height="8.030000000000001" viewBox="0 0 10 11"><g fill="#20b598"><rect x="2.3" y="0" width="4.9" height="4.4" rx="1.6"/><rect x="0" y="2.8" width="4.9" height="3.6" rx="1.5"/><rect x="2.3" y="2.8" width="2.6" height="1.6"/><rect x="5.1" y="4.6" width="4.9" height="3.6" rx="1.5"/><rect x="2.8" y="6.6" width="4.9" height="4.4" rx="1.6"/><rect x="5.1" y="6.6" width="2.6" height="1.6"/></g></svg>
<div class="s" style="left:724px;top:102.80px;font-size:7.2px;line-height:12px;color:#9d9d9d;">main_menu.py</div>
<svg class="i" style="left:793.95px;top:104.285px;" width="7.3" height="8.030000000000001" viewBox="0 0 10 11"><g fill="#20b598"><rect x="2.3" y="0" width="4.9" height="4.4" rx="1.6"/><rect x="0" y="2.8" width="4.9" height="3.6" rx="1.5"/><rect x="2.3" y="2.8" width="2.6" height="1.6"/><rect x="5.1" y="4.6" width="4.9" height="3.6" rx="1.5"/><rect x="2.8" y="6.6" width="4.9" height="4.4" rx="1.6"/><rect x="5.1" y="6.6" width="2.6" height="1.6"/></g></svg>
<div class="s" style="left:805px;top:102.80px;font-size:7.2px;line-height:12px;color:#9d9d9d;">lead.py</div>
<svg class="i" style="left:861.35px;top:104.285px;" width="7.3" height="8.030000000000001" viewBox="0 0 10 11"><g fill="#20b598"><rect x="2.3" y="0" width="4.9" height="4.4" rx="1.6"/><rect x="0" y="2.8" width="4.9" height="3.6" rx="1.5"/><rect x="2.3" y="2.8" width="2.6" height="1.6"/><rect x="5.1" y="4.6" width="4.9" height="3.6" rx="1.5"/><rect x="2.8" y="6.6" width="4.9" height="4.4" rx="1.6"/><rect x="5.1" y="6.6" width="2.6" height="1.6"/></g></svg>
<div class="s" style="left:872.8px;top:102.80px;font-size:7.2px;line-height:12px;color:#9d9d9d;">user_state.py</div>
<svg class="i" style="left:483.0px;top:104.9px;" width="7" height="7" viewBox="0 0 16 16"><path d="M3 3l10 10M13 3L3 13" fill="none" stroke="#cccccc" stroke-width="1.6" stroke-linecap="round" stroke-linejoin="round" /></svg>
<div class="r" style="left:611px;top:99px;width:1px;height:17px;background:#262626;"></div>
<div class="r" style="left:706px;top:99px;width:1px;height:17px;background:#262626;"></div>
<div class="r" style="left:787.4px;top:99px;width:1px;height:17px;background:#262626;"></div>
<div class="r" style="left:854.7px;top:99px;width:1px;height:17px;background:#262626;"></div>
<div class="r" style="left:930.4px;top:99px;width:1px;height:17px;background:#262626;"></div>
<svg class="i" style="left:936.85px;top:104.285px;" width="7.3" height="8.030000000000001" viewBox="0 0 10 11"><g fill="#20b598"><rect x="2.3" y="0" width="4.9" height="4.4" rx="1.6"/><rect x="0" y="2.8" width="4.9" height="3.6" rx="1.5"/><rect x="2.3" y="2.8" width="2.6" height="1.6"/><rect x="5.1" y="4.6" width="4.9" height="3.6" rx="1.5"/><rect x="2.8" y="6.6" width="4.9" height="4.4" rx="1.6"/><rect x="5.1" y="6.6" width="2.6" height="1.6"/></g></svg>
<div class="r" style="left:948.8px;top:106.6px;width:3.6px;height:3.6px;border-radius:50%;border:0.8px solid #bbbbbb"></div>
<svg class="i" style="left:957.0px;top:104.5px;" width="8" height="8" viewBox="0 0 16 16"><path d="M4 2l9 6l-9 6z" fill="none" stroke="#d0b0e8" stroke-width="1.3" stroke-linecap="round" stroke-linejoin="round" /></svg>
<svg class="i" style="left:967.5px;top:106.0px;" width="5" height="5" viewBox="0 0 16 16"><path d="M3 6l5 5l5-5" fill="none" stroke="#c5c5c5" stroke-width="1.8" stroke-linecap="round" stroke-linejoin="round" /></svg>
<svg class="i" style="left:979.75px;top:104.25px;" width="8.5" height="8.5" viewBox="0 0 16 16"><rect x="1.5" y="2" width="13" height="12" rx="1" fill="none" stroke="#d8b8e0" stroke-width="1.4"/><path d="M8 2v12" stroke="#d8b8e0" stroke-width="1.4"/></svg>
<svg class="i" style="left:994.0px;top:104.5px;" width="8" height="8" viewBox="0 0 16 16"><path d="M14 8H2M7 3L2 8l5 5" fill="none" stroke="#d5d5d5" stroke-width="1.2" stroke-linecap="round" stroke-linejoin="round" /></svg>
<svg class="i" style="left:1008.5px;top:104.5px;" width="8" height="8" viewBox="0 0 16 16"><path d="M2 8h12M9 3l5 5l-5 5" fill="none" stroke="#d5d5d5" stroke-width="1.2" stroke-linecap="round" stroke-linejoin="round" /></svg>
<div class="r" style="left:1023.6px;top:107.9px;width:1.3px;height:1.3px;border-radius:50%;background:#cccccc"></div>
<div class="r" style="left:1026.8px;top:107.9px;width:1.3px;height:1.3px;border-radius:50%;background:#cccccc"></div>
<div class="r" style="left:1030.0px;top:107.9px;width:1.3px;height:1.3px;border-radius:50%;background:#cccccc"></div>
<div class="s" style="left:430.8px;top:118.00px;font-size:7.5px;line-height:12px;color:#a9a9a9;">abistep-lead-bot</div>
<svg class="i" style="left:484.9px;top:120.0px;" width="8" height="8" viewBox="0 0 16 16"><path d="M5.5 2.5l5 5.5l-5 5.5" fill="none" stroke="#a9a9a9" stroke-width="1.4" stroke-linecap="round" stroke-linejoin="round" /></svg>
<div class="s" style="left:494.2px;top:118.00px;font-size:7.2px;line-height:12px;color:#a9a9a9;">src</div>
<svg class="i" style="left:504.6px;top:120.0px;" width="8" height="8" viewBox="0 0 16 16"><path d="M5.5 2.5l5 5.5l-5 5.5" fill="none" stroke="#a9a9a9" stroke-width="1.4" stroke-linecap="round" stroke-linejoin="round" /></svg>
<div class="s" style="left:511.9px;top:118.00px;font-size:7.2px;line-height:12px;color:#a9a9a9;">services</div>
<svg class="i" style="left:538.0px;top:120.0px;" width="8" height="8" viewBox="0 0 16 16"><path d="M5.5 2.5l5 5.5l-5 5.5" fill="none" stroke="#a9a9a9" stroke-width="1.4" stroke-linecap="round" stroke-linejoin="round" /></svg>
<svg class="i" style="left:547.5500000000001px;top:119.685px;" width="7.3" height="8.030000000000001" viewBox="0 0 10 11"><g fill="#20b598"><rect x="2.3" y="0" width="4.9" height="4.4" rx="1.6"/><rect x="0" y="2.8" width="4.9" height="3.6" rx="1.5"/><rect x="2.3" y="2.8" width="2.6" height="1.6"/><rect x="5.1" y="4.6" width="4.9" height="3.6" rx="1.5"/><rect x="2.8" y="6.6" width="4.9" height="4.4" rx="1.6"/><rect x="5.1" y="6.6" width="2.6" height="1.6"/></g></svg>
<div class="s" style="left:558.5px;top:118.00px;font-size:7.2px;line-height:12px;color:#a9a9a9;">database.py</div>
<svg class="i" style="left:599.3px;top:120.0px;" width="8" height="8" viewBox="0 0 16 16"><path d="M5.5 2.5l5 5.5l-5 5.5" fill="none" stroke="#a9a9a9" stroke-width="1.4" stroke-linecap="round" stroke-linejoin="round" /></svg>
<div class="s" style="left:606.6px;top:118.00px;font-size:7.2px;line-height:12px;color:#a9a9a9;">...</div>
<div class="r" style="left:460px;top:129.4px;width:505px;height:10.2px;background:transparent;border:1px solid #282828"></div>
<div class="m" style="left:425px;top:129.74px;font-size:7.2px;line-height:10.72px;color:#cccccc;width:21px;text-align:right">1</div>
<div class="m" style="left:461px;top:129.74px;font-size:7.2px;line-height:10.72px;color:#d4d4d4;"><span style="color:#c586c0">from</span><span style="color:#d4d4d4"> </span><span style="color:#4ec9b0">motor.motor_asyncio</span><span style="color:#d4d4d4"> </span><span style="color:#c586c0">import</span><span style="color:#d4d4d4"> AsyncIOMotorClient</span></div>
<div class="m" style="left:425px;top:140.46px;font-size:7.2px;line-height:10.72px;color:#6e7681;width:21px;text-align:right">2</div>
<div class="m" style="left:461px;top:140.46px;font-size:7.2px;line-height:10.72px;color:#d4d4d4;"><span style="color:#c586c0">from</span><span style="color:#d4d4d4"> </span><span style="color:#4ec9b0">src.config</span><span style="color:#d4d4d4"> </span><span style="color:#c586c0">import</span><span style="color:#d4d4d4"> settings</span></div>
<div class="m" style="left:425px;top:151.18px;font-size:7.2px;line-height:10.72px;color:#6e7681;width:21px;text-align:right">3</div>
<div class="m" style="left:425px;top:161.90px;font-size:7.2px;line-height:10.72px;color:#6e7681;width:21px;text-align:right">4</div>
<div class="m" style="left:461px;top:161.90px;font-size:7.2px;line-height:10.72px;color:#d4d4d4;"><span style="color:#569cd6">class</span><span style="color:#d4d4d4"> </span><span style="color:#4ec9b0">Database</span><span style="color:#d4d4d4">:</span></div>
<div class="m" style="left:425px;top:172.62px;font-size:7.2px;line-height:10.72px;color:#6e7681;width:21px;text-align:right">5</div>
<div class="m" style="left:461px;top:172.62px;font-size:7.2px;line-height:10.72px;color:#d4d4d4;"><span style="color:#9cdcfe">    client</span><span style="color:#d4d4d4">: </span><span style="color:#d4d4d4">AsyncIOMotorClient</span><span style="color:#d4d4d4"> = </span><span style="color:#569cd6">None</span></div>
<div class="m" style="left:425px;top:183.34px;font-size:7.2px;line-height:10.72px;color:#6e7681;width:21px;text-align:right">6</div>
<div class="m" style="left:461px;top:183.34px;font-size:7.2px;line-height:10.72px;color:#d4d4d4;"><span style="color:#9cdcfe">    db</span><span style="color:#d4d4d4"> = </span><span style="color:#569cd6">None</span></div>
<div class="m" style="left:425px;top:194.06px;font-size:7.2px;line-height:10.72px;color:#6e7681;width:21px;text-align:right">7</div>
<div class="m" style="left:425px;top:204.78px;font-size:7.2px;line-height:10.72px;color:#6e7681;width:21px;text-align:right">8</div>
<div class="m" style="left:461px;top:204.78px;font-size:7.2px;line-height:10.72px;color:#d4d4d4;"><span style="color:#569cd6">    def</span><span style="color:#d4d4d4"> </span><span style="color:#dcdcaa">connect</span><span style="color:#ffd700">(</span><span style="color:#9cdcfe">self</span><span style="color:#ffd700">)</span><span style="color:#d4d4d4">:</span></div>
<div class="m" style="left:425px;top:215.50px;font-size:7.2px;line-height:10.72px;color:#6e7681;width:21px;text-align:right">9</div>
<div class="m" style="left:461px;top:215.50px;font-size:7.2px;line-height:10.72px;color:#d4d4d4;"><span style="color:#9cdcfe">        self</span><span style="color:#d4d4d4">.</span><span style="color:#9cdcfe">client</span><span style="color:#d4d4d4"> = </span><span style="color:#d4d4d4">AsyncIOMotorClient</span><span style="color:#ffd700">(</span><span style="color:#9cdcfe">settings</span><span style="color:#d4d4d4">.</span><span style="color:#9cdcfe">mongo_url</span><span style="color:#ffd700">)</span></div>
<div class="m" style="left:425px;top:226.22px;font-size:7.2px;line-height:10.72px;color:#6e7681;width:21px;text-align:right">10</div>
<div class="m" style="left:461px;top:226.22px;font-size:7.2px;line-height:10.72px;color:#d4d4d4;"><span style="color:#9cdcfe">        self</span><span style="color:#d4d4d4">.</span><span style="color:#9cdcfe">db</span><span style="color:#d4d4d4"> = </span><span style="color:#9cdcfe">self</span><span style="color:#d4d4d4">.</span><span style="color:#9cdcfe">client</span><span style="color:#ffd700">[</span><span style="color:#9cdcfe">settings</span><span style="color:#d4d4d4">.</span><span style="color:#9cdcfe">MONGO_DB</span><span style="color:#ffd700">]</span></div>
<div class="m" style="left:425px;top:236.94px;font-size:7.2px;line-height:10.72px;color:#6e7681;width:21px;text-align:right">11</div>
<div class="m" style="left:425px;top:247.66px;font-size:7.2px;line-height:10.72px;color:#6e7681;width:21px;text-align:right">12</div>
<div class="m" style="left:461px;top:247.66px;font-size:7.2px;line-height:10.72px;color:#d4d4d4;"><span style="color:#569cd6">    def</span><span style="color:#d4d4d4"> </span><span style="color:#dcdcaa">close</span><span style="color:#ffd700">(</span><span style="color:#9cdcfe">self</span><span style="color:#ffd700">)</span><span style="color:#d4d4d4">:</span></div>
<div class="m" style="left:425px;top:258.38px;font-size:7.2px;line-height:10.72px;color:#6e7681;width:21px;text-align:right">13</div>
<div class="m" style="left:461px;top:258.38px;font-size:7.2px;line-height:10.72px;color:#d4d4d4;"><span style="color:#c586c0">        if</span><span style="color:#d4d4d4"> </span><span style="color:#9cdcfe">self</span><span style="color:#d4d4d4">.</span><span style="color:#9cdcfe">client</span><span style="color:#d4d4d4">:</span></div>
<div class="m" style="left:425px;top:269.10px;font-size:7.2px;line-height:10.72px;color:#6e7681;width:21px;text-align:right">14</div>
<div class="m" style="left:461px;top:269.10px;font-size:7.2px;line-height:10.72px;color:#d4d4d4;"><span style="color:#9cdcfe">            self</span><span style="color:#d4d4d4">.</span><span style="color:#9cdcfe">client</span><span style="color:#d4d4d4">.</span><span style="color:#dcdcaa">close</span><span style="color:#ffd700">()</span></div>
<div class="m" style="left:425px;top:279.82px;font-size:7.2px;line-height:10.72px;color:#6e7681;width:21px;text-align:right">15</div>
<div class="m" style="left:425px;top:290.54px;font-size:7.2px;line-height:10.72px;color:#6e7681;width:21px;text-align:right">16</div>
<div class="m" style="left:461px;top:290.54px;font-size:7.2px;line-height:10.72px;color:#d4d4d4;"><span style="color:#9cdcfe">db</span><span style="color:#d4d4d4"> = </span><span style="color:#4ec9b0">Database</span><span style="color:#ffd700">()</span></div>
<div class="m" style="left:425px;top:301.26px;font-size:7.2px;line-height:10.72px;color:#6e7681;width:21px;text-align:right">17</div>
<div class="r" style="left:460.6px;top:172.61999999999998px;width:0.8px;height:107.2px;background:#333333;"></div>
<div class="r" style="left:478.3px;top:215.5px;width:0.8px;height:21.44px;background:#333333;"></div>
<div class="r" style="left:478.3px;top:258.38px;width:0.8px;height:21.44px;background:#333333;"></div>
<div class="r" style="left:495.6px;top:269.1px;width:0.8px;height:10.72px;background:#333333;"></div>
<div class="r" style="left:969.0px;top:129.0px;width:2.24px;height:0.95px;background:#c586c0;opacity:0.45"></div>
<div class="r" style="left:971.8px;top:129.0px;width:10.64px;height:0.95px;background:#4ec9b0;opacity:0.45"></div>
<div class="r" style="left:983.0px;top:129.0px;width:3.36px;height:0.95px;background:#c586c0;opacity:0.45"></div>
<div class="r" style="left:986.92px;top:129.0px;width:10.08px;height:0.95px;background:#d4d4d4;opacity:0.45"></div>
<div class="r" style="left:969.0px;top:130.13px;width:2.24px;height:0.95px;background:#c586c0;opacity:0.45"></div>
<div class="r" style="left:971.8px;top:130.13px;width:5.6px;height:0.95px;background:#4ec9b0;opacity:0.45"></div>
<div class="r" style="left:977.96px;top:130.13px;width:3.36px;height:0.95px;background:#c586c0;opacity:0.45"></div>
<div class="r" style="left:981.88px;top:130.13px;width:4.48px;height:0.95px;background:#d4d4d4;opacity:0.45"></div>
<div class="r" style="left:969.0px;top:132.39px;width:2.8px;height:0.95px;background:#569cd6;opacity:0.45"></div>
<div class="r" style="left:972.36px;top:132.39px;width:4.48px;height:0.95px;background:#4ec9b0;opacity:0.45"></div>
<div class="r" style="left:976.84px;top:132.39px;width:0.56px;height:0.95px;background:#d4d4d4;opacity:0.45"></div>
<div class="r" style="left:971.24px;top:133.52px;width:3.36px;height:0.95px;background:#9cdcfe;opacity:0.45"></div>
<div class="r" style="left:974.6px;top:133.52px;width:0.56px;height:0.95px;background:#d4d4d4;opacity:0.45"></div>
<div class="r" style="left:975.72px;top:133.52px;width:10.08px;height:0.95px;background:#d4d4d4;opacity:0.45"></div>
<div class="r" style="left:986.36px;top:133.52px;width:0.56px;height:0.95px;background:#d4d4d4;opacity:0.45"></div>
<div class="r" style="left:987.48px;top:133.52px;width:2.24px;height:0.95px;background:#569cd6;opacity:0.45"></div>
<div class="r" style="left:971.24px;top:134.65px;width:1.12px;height:0.95px;background:#9cdcfe;opacity:0.45"></div>
<div class="r" style="left:972.92px;top:134.65px;width:0.56px;height:0.95px;background:#d4d4d4;opacity:0.45"></div>
<div class="r" style="left:974.04px;top:134.65px;width:2.24px;height:0.95px;background:#569cd6;opacity:0.45"></div>
<div class="r" style="left:971.24px;top:136.91px;width:1.68px;height:0.95px;background:#569cd6;opacity:0.45"></div>
<div class="r" style="left:973.48px;top:136.91px;width:3.92px;height:0.95px;background:#dcdcaa;opacity:0.45"></div>
<div class="r" style="left:977.4px;top:136.91px;width:0.56px;height:0.95px;background:#ffd700;opacity:0.45"></div>
<div class="r" style="left:977.96px;top:136.91px;width:2.24px;height:0.95px;background:#9cdcfe;opacity:0.45"></div>
<div class="r" style="left:980.2px;top:136.91px;width:0.56px;height:0.95px;background:#ffd700;opacity:0.45"></div>
<div class="r" style="left:980.76px;top:136.91px;width:0.56px;height:0.95px;background:#d4d4d4;opacity:0.45"></div>
<div class="r" style="left:973.48px;top:138.04px;width:2.24px;height:0.95px;background:#9cdcfe;opacity:0.45"></div>
<div class="r" style="left:975.72px;top:138.04px;width:0.56px;height:0.95px;background:#d4d4d4;opacity:0.45"></div>
<div class="r" style="left:976.28px;top:138.04px;width:3.36px;height:0.95px;background:#9cdcfe;opacity:0.45"></div>
<div class="r" style="left:980.2px;top:138.04px;width:0.56px;height:0.95px;background:#d4d4d4;opacity:0.45"></div>
<div class="r" style="left:981.32px;top:138.04px;width:10.08px;height:0.95px;background:#d4d4d4;opacity:0.45"></div>
<div class="r" style="left:991.4px;top:138.04px;width:0.56px;height:0.95px;background:#ffd700;opacity:0.45"></div>
<div class="r" style="left:991.96px;top:138.04px;width:4.48px;height:0.95px;background:#9cdcfe;opacity:0.45"></div>
<div class="r" style="left:996.44px;top:138.04px;width:0.56px;height:0.95px;background:#d4d4d4;opacity:0.45"></div>
<div class="r" style="left:997.0px;top:138.04px;width:5.04px;height:0.95px;background:#9cdcfe;opacity:0.45"></div>
<div class="r" style="left:1002.04px;top:138.04px;width:0.56px;height:0.95px;background:#ffd700;opacity:0.45"></div>
<div class="r" style="left:973.48px;top:139.17px;width:2.24px;height:0.95px;background:#9cdcfe;opacity:0.45"></div>
<div class="r" style="left:975.72px;top:139.17px;width:0.56px;height:0.95px;background:#d4d4d4;opacity:0.45"></div>
<div class="r" style="left:976.28px;top:139.17px;width:1.12px;height:0.95px;background:#9cdcfe;opacity:0.45"></div>
<div class="r" style="left:977.96px;top:139.17px;width:0.56px;height:0.95px;background:#d4d4d4;opacity:0.45"></div>
<div class="r" style="left:979.08px;top:139.17px;width:2.24px;height:0.95px;background:#9cdcfe;opacity:0.45"></div>
<div class="r" style="left:981.32px;top:139.17px;width:0.56px;height:0.95px;background:#d4d4d4;opacity:0.45"></div>
<div class="r" style="left:981.88px;top:139.17px;width:3.36px;height:0.95px;background:#9cdcfe;opacity:0.45"></div>
<div class="r" style="left:985.24px;top:139.17px;width:0.56px;height:0.95px;background:#ffd700;opacity:0.45"></div>
<div class="r" style="left:985.8px;top:139.17px;width:4.48px;height:0.95px;background:#9cdcfe;opacity:0.45"></div>
<div class="r" style="left:990.28px;top:139.17px;width:0.56px;height:0.95px;background:#d4d4d4;opacity:0.45"></div>
<div class="r" style="left:990.84px;top:139.17px;width:4.48px;height:0.95px;background:#9cdcfe;opacity:0.45"></div>
<div class="r" style="left:995.32px;top:139.17px;width:0.56px;height:0.95px;background:#ffd700;opacity:0.45"></div>
<div class="r" style="left:971.24px;top:141.43px;width:1.68px;height:0.95px;background:#569cd6;opacity:0.45"></div>
<div class="r" style="left:973.48px;top:141.43px;width:2.8px;height:0.95px;background:#dcdcaa;opacity:0.45"></div>
<div class="r" style="left:976.28px;top:141.43px;width:0.56px;height:0.95px;background:#ffd700;opacity:0.45"></div>
<div class="r" style="left:976.84px;top:141.43px;width:2.24px;height:0.95px;background:#9cdcfe;opacity:0.45"></div>
<div class="r" style="left:979.08px;top:141.43px;width:0.56px;height:0.95px;background:#ffd700;opacity:0.45"></div>
<div class="r" style="left:979.64px;top:141.43px;width:0.56px;height:0.95px;background:#d4d4d4;opacity:0.45"></div>
<div class="r" style="left:973.48px;top:142.56px;width:1.12px;height:0.95px;background:#c586c0;opacity:0.45"></div>
<div class="r" style="left:975.16px;top:142.56px;width:2.24px;height:0.95px;background:#9cdcfe;opacity:0.45"></div>
<div class="r" style="left:977.4px;top:142.56px;width:0.56px;height:0.95px;background:#d4d4d4;opacity:0.45"></div>
<div class="r" style="left:977.96px;top:142.56px;width:3.36px;height:0.95px;background:#9cdcfe;opacity:0.45"></div>
<div class="r" style="left:981.32px;top:142.56px;width:0.56px;height:0.95px;background:#d4d4d4;opacity:0.45"></div>
<div class="r" style="left:975.72px;top:143.69px;width:2.24px;height:0.95px;background:#9cdcfe;opacity:0.45"></div>
<div class="r" style="left:977.96px;top:143.69px;width:0.56px;height:0.95px;background:#d4d4d4;opacity:0.45"></div>
<div class="r" style="left:978.52px;top:143.69px;width:3.36px;height:0.95px;background:#9cdcfe;opacity:0.45"></div>
<div class="r" style="left:981.88px;top:143.69px;width:0.56px;height:0.95px;background:#d4d4d4;opacity:0.45"></div>
<div class="r" style="left:982.44px;top:143.69px;width:2.8px;height:0.95px;background:#dcdcaa;opacity:0.45"></div>
<div class="r" style="left:985.24px;top:143.69px;width:1.12px;height:0.95px;background:#ffd700;opacity:0.45"></div>
<div class="r" style="left:969.0px;top:145.95px;width:1.12px;height:0.95px;background:#9cdcfe;opacity:0.45"></div>
<div class="r" style="left:970.68px;top:145.95px;width:0.56px;height:0.95px;background:#d4d4d4;opacity:0.45"></div>
<div class="r" style="left:971.8px;top:145.95px;width:4.48px;height:0.95px;background:#4ec9b0;opacity:0.45"></div>
<div class="r" style="left:976.28px;top:145.95px;width:1.12px;height:0.95px;background:#ffd700;opacity:0.45"></div>
<div class="r" style="left:1033px;top:116px;width:0.8px;height:378px;background:#2a2a2a;"></div>
<div class="r" style="left:1033.5px;top:128.8px;width:7px;height:1.3px;background:#a0a0a0;"></div>
<div class="r" style="left:566.8px;top:498.6px;width:35.8px;height:12.9px;background:#2c2c2c;border-radius:3px"></div>
<div class="s" style="left:434px;top:499.20px;font-size:7.2px;line-height:12px;color:#9d9d9d;">Problems</div>
<div class="s" style="left:476px;top:499.20px;font-size:7.2px;line-height:12px;color:#9d9d9d;">Output</div>
<div class="s" style="left:511px;top:499.20px;font-size:7.2px;line-height:12px;color:#9d9d9d;">Debug Console</div>
<div class="s" style="left:570.5px;top:499.20px;font-size:7.2px;line-height:12px;color:#e7e7e7;">Terminal</div>
<div class="s" style="left:611px;top:499.20px;font-size:7.2px;line-height:12px;color:#9d9d9d;">Ports</div>
<div class="m" style="left:433.8px;top:517.61px;font-size:6.57px;line-height:9.59px;color:#cccccc;"><span style="color:#17aacd">abistep_bot</span>  <span style="color:#1e9a4e">|</span> 2026-01-12 17:33:54,824 - aiogram.dispatcher - INFO - Start polling</div>
<div class="m" style="left:433.8px;top:527.20px;font-size:6.57px;line-height:9.59px;color:#cccccc;"><span style="color:#17aacd">abistep_bot</span>  <span style="color:#1e9a4e">|</span> 2026-01-12 17:33:54,897 - aiogram.dispatcher - INFO - Run polling for bot @IlyaBel_bot id=7729452383 - &#x27;Бот Ильи Белова</div>
<div class="m" style="left:433.8px;top:536.78px;font-size:6.57px;line-height:9.59px;color:#cccccc;">&#x27;</div>
<div class="m" style="left:433.8px;top:546.38px;font-size:6.57px;line-height:9.59px;color:#cccccc;"><span style="color:#17aacd">abistep_bot</span>  <span style="color:#1e9a4e">|</span> 2026-01-12 17:34:17,881 - aiogram.event - INFO - Update id=410472017 is handled. Duration 373 ms by bot id=7729452383</div>
<div class="m" style="left:433.8px;top:555.97px;font-size:6.57px;line-height:9.59px;color:#cccccc;"><span style="color:#17aacd">abistep_bot</span>  <span style="color:#1e9a4e">|</span> 2026-01-12 17:35:31,808 - aiogram.event - INFO - Update id=410472018 is handled. Duration 110 ms by bot id=7729452383</div>
<div class="m" style="left:433.8px;top:565.56px;font-size:6.57px;line-height:9.59px;color:#cccccc;"><span style="color:#17aacd">abistep_bot</span>  <span style="color:#1e9a4e">|</span> 2026-01-12 18:04:56,337 - aiogram.dispatcher - ERROR - Failed to fetch updates - TelegramNetworkError: HTTP Client says</div>
<div class="m" style="left:433.8px;top:575.14px;font-size:6.57px;line-height:9.59px;color:#cccccc;"> - ServerDisconnectedError: Server disconnected</div>
<div class="m" style="left:433.8px;top:584.74px;font-size:6.57px;line-height:9.59px;color:#cccccc;"><span style="color:#17aacd">abistep_bot</span>  <span style="color:#1e9a4e">|</span> 2026-01-12 18:04:56,337 - aiogram.dispatcher - WARNING - Sleep for 1.000000 seconds and try again... (tryings = 0, bot</div>
<div class="m" style="left:433.8px;top:594.33px;font-size:6.57px;line-height:9.59px;color:#cccccc;">id = 7729452383)</div>
<div class="m" style="left:433.8px;top:603.92px;font-size:6.57px;line-height:9.59px;color:#cccccc;"><span style="color:#17aacd">abistep_bot</span>  <span style="color:#1e9a4e">|</span> 2026-01-13 07:54:53,811 - aiogram.dispatcher - ERROR - Failed to fetch updates - TelegramNetworkError: HTTP Client says</div>
<div class="m" style="left:433.8px;top:613.50px;font-size:6.57px;line-height:9.59px;color:#cccccc;"> - ClientConnectorError: Cannot connect to host api.telegram.org:443 ssl:default [Connect call failed (&#x27;149.154.166.110&#x27;, 443)]</div>
<div class="m" style="left:433.8px;top:623.10px;font-size:6.57px;line-height:9.59px;color:#cccccc;"><span style="color:#17aacd">abistep_bot</span>  <span style="color:#1e9a4e">|</span> 2026-01-13 07:54:53,811 - aiogram.dispatcher - WARNING - Sleep for 1.527028 seconds and try again... (tryings = 1, bot</div>
<div class="m" style="left:433.8px;top:632.69px;font-size:6.57px;line-height:9.59px;color:#cccccc;">id = 7729452383)</div>
<div class="m" style="left:433.8px;top:642.27px;font-size:6.57px;line-height:9.59px;color:#cccccc;"><span style="color:#17aacd">abistep_bot</span>  <span style="color:#1e9a4e">|</span> 2026-01-13 07:54:55,342 - aiogram.dispatcher - ERROR - Failed to fetch updates - TelegramNetworkError: HTTP Client says</div>
<div class="m" style="left:433.8px;top:651.87px;font-size:6.57px;line-height:9.59px;color:#cccccc;"> - ClientConnectorError: Cannot connect to host api.telegram.org:443 ssl:default [Connect call failed (&#x27;149.154.166.110&#x27;, 443)]</div>
<div class="m" style="left:433.8px;top:661.46px;font-size:6.57px;line-height:9.59px;color:#cccccc;"><span style="color:#17aacd">abistep_bot</span>  <span style="color:#1e9a4e">|</span> 2026-01-13 07:54:55,342 - aiogram.dispatcher - WARNING - Sleep for 1.968499 seconds and try again... (tryings = 2, bot</div>
<div class="m" style="left:433.8px;top:671.04px;font-size:6.57px;line-height:9.59px;color:#cccccc;">id = 7729452383)</div>
<div class="m" style="left:433.8px;top:680.63px;font-size:6.57px;line-height:9.59px;color:#cccccc;"><span style="color:#17aacd">abistep_bot</span>  <span style="color:#1e9a4e">|</span> 2026-01-13 07:54:57,575 - aiogram.dispatcher - INFO - Connection established (tryings = 3, bot id = 7729452383)</div>
<div class="m" style="left:433.8px;top:690.23px;font-size:6.57px;line-height:9.59px;color:#cccccc;"><span style="color:#17aacd">abistep_bot</span>  <span style="color:#1e9a4e">|</span> 2026-01-13 07:54:57,782 - aiogram.event - INFO - Update id=410472019 is handled. Duration 207 ms by bot id=7729452383</div>
<div class="m" style="left:433.8px;top:699.82px;font-size:6.57px;line-height:9.59px;color:#cccccc;"><span style="color:#17aacd">abistep_bot</span>  <span style="color:#1e9a4e">|</span> 2026-01-13 07:54:57,805 - aiogram.event - INFO - Update id=410472020 is handled. Duration 229 ms by bot id=7729452383</div>
<div class="r" style="left:434px;top:708.2px;width:3.8px;height:7.5px;background:transparent;border:0.8px solid #cccccc"></div>
<svg class="i" style="left:964.5px;top:501.0px;" width="8" height="8" viewBox="0 0 16 16"><path d="M8 2v12M2 8h12" fill="none" stroke="#c5c5c5" stroke-width="1.2" stroke-linecap="round" stroke-linejoin="round" /></svg>
<svg class="i" style="left:974.5px;top:502.5px;" width="5" height="5" viewBox="0 0 16 16"><path d="M3 6l5 5l5-5" fill="none" stroke="#c5c5c5" stroke-width="1.8" stroke-linecap="round" stroke-linejoin="round" /></svg>
<div class="r" style="left:987.6px;top:504.3px;width:1.3px;height:1.3px;border-radius:50%;background:#cccccc"></div>
<div class="r" style="left:990.8000000000001px;top:504.3px;width:1.3px;height:1.3px;border-radius:50%;background:#cccccc"></div>
<div class="r" style="left:994.0px;top:504.3px;width:1.3px;height:1.3px;border-radius:50%;background:#cccccc"></div>
<div class="r" style="left:1002.5px;top:500px;width:0.8px;height:10px;background:#3a3a3a;"></div>
<svg class="i" style="left:1009.3px;top:500.8px;" width="8" height="8" viewBox="0 0 16 16"><rect x="3" y="3" width="10" height="10" fill="none" stroke="#cccccc" stroke-width="1.4"/><path d="M1 1l3 3M15 1l-3 3M1 15l3-3M15 15l-3-3" stroke="#e05050" stroke-width="1.6"/></svg>
<svg class="i" style="left:1024.3px;top:501.3px;" width="7" height="7" viewBox="0 0 16 16"><path d="M3 3l10 10M13 3L3 13" fill="none" stroke="#c5c5c5" stroke-width="1.5" stroke-linecap="round" stroke-linejoin="round" /></svg>
<div class="r" style="left:965.4px;top:516px;width:6.6px;height:199px;background:#141414;border-left:0.8px solid #2a2a2a"></div>
<div class="r" style="left:973px;top:527px;width:67px;height:11.8px;background:#2c2c2e;"></div>
<svg class="i" style="left:978.95px;top:516.95px;" width="8.5" height="8.5" viewBox="0 0 16 16"><rect x="1.5" y="1.5" width="13" height="13" rx="2" fill="none" stroke="#c8c8c8" stroke-width="1.3"/><path d="M4.5 5l3 2.5l-3 2.5M8 11h3.5" fill="none" stroke="#c8c8c8" stroke-width="1.3"/></svg>
<div class="s" style="left:989.8px;top:515.20px;font-size:7.2px;line-height:12px;color:#d2a91a;">powersh...</div>
<svg class="i" style="left:1026.45px;top:516.75px;" width="8.5" height="8.5" viewBox="0 0 16 16"><path d="M8 1.5L15 14H1z" fill="none" stroke="#d2a91a" stroke-width="1.3"/><path d="M8 6v4M8 11.5v1" stroke="#d2a91a" stroke-width="1.3"/></svg>
<svg class="i" style="left:978.95px;top:528.95px;" width="8.5" height="8.5" viewBox="0 0 16 16"><rect x="1.5" y="1.5" width="13" height="13" rx="2" fill="none" stroke="#c8c8c8" stroke-width="1.3"/><path d="M4.5 5l3 2.5l-3 2.5M8 11h3.5" fill="none" stroke="#c8c8c8" stroke-width="1.3"/></svg>
<div class="s" style="left:989.8px;top:527.20px;font-size:7.2px;line-height:12px;color:#e0e0e0;">docker-com...</div>
<div class="r" style="left:233px;top:718.5px;width:16px;height:11px;background:#0078d4;"></div>
<svg class="i" style="left:251.75px;top:720.05px;" width="8.5" height="8.5" viewBox="0 0 16 16"><path d="M4 4.5v7M4 11.5a1.5 1.5 0 1 0 0 3a1.5 1.5 0 1 0 0-3zM4 1.5a1.5 1.5 0 1 0 0 3a1.5 1.5 0 1 0 0-3zM12 3a1.5 1.5 0 1 0 0 3a1.5 1.5 0 1 0 0-3zM12 6c0 3-8 2-8 5.5" fill="none" stroke="#cccccc" stroke-width="1.2" stroke-linecap="round" stroke-linejoin="round" /></svg>
<svg class="i" style="left:281.25px;top:720.25px;" width="8.5" height="8.5" viewBox="0 0 16 16"><path d="M2.5 8a5.5 5.5 0 0 1 10-3M13.5 8a5.5 5.5 0 0 1-10 3M13 2v3h-3M3 14v-3h3" fill="none" stroke="#cccccc" stroke-width="1.3" stroke-linecap="round" stroke-linejoin="round" /></svg>
<svg class="i" style="left:297.5px;top:720.5px;" width="8" height="8" viewBox="0 0 16 16"><path d="M8 1.5a6.5 6.5 0 1 1 0 13a6.5 6.5 0 1 1 0-13zM5.5 5.5l5 5M10.5 5.5l-5 5" fill="none" stroke="#cccccc" stroke-width="1.1" stroke-linecap="round" stroke-linejoin="round" /></svg>
<svg class="i" style="left:313.0px;top:720.2px;" width="8" height="8" viewBox="0 0 16 16"><path d="M8 1.5L15 14H1zM8 6v4M8 11.5v.5" fill="none" stroke="#cccccc" stroke-width="1.1" stroke-linecap="round" stroke-linejoin="round" /></svg>
<svg class="i" style="left:335.5px;top:720.5px;" width="8" height="8" viewBox="0 0 16 16"><path d="M3 4.5a6 6 0 1 1-.5 6M1.5 2v3.5h3.5M8 4.5V8l2.5 2" fill="none" stroke="#cccccc" stroke-width="1.1" stroke-linecap="round" stroke-linejoin="round" /></svg>
<div class="s" style="left:263px;top:718.50px;font-size:6.9px;line-height:12px;color:#cccccc;">main</div>
<div class="s" style="left:307.5px;top:718.50px;font-size:6.9px;line-height:12px;color:#cccccc;">0</div>
<div class="s" style="left:322.5px;top:718.50px;font-size:6.9px;line-height:12px;color:#cccccc;">0</div>
<div class="s" style="left:345px;top:718.50px;font-size:6.9px;line-height:12px;color:#cccccc;">WakaTime Error</div>
<div class="s" style="left:401px;top:718.50px;font-size:6.9px;line-height:12px;color:#cccccc;">WakaTime api key not provided</div>
<div class="s" style="left:857px;top:718.50px;font-size:6.9px;line-height:12px;color:#cccccc;">Ln 1, Col 1</div>
<div class="s" style="left:897.5px;top:718.50px;font-size:6.9px;line-height:12px;color:#cccccc;">Spaces: 4</div>
<div class="s" style="left:934px;top:718.50px;font-size:6.9px;line-height:12px;color:#cccccc;">UTF-8</div>
<div class="s" style="left:960.5px;top:718.50px;font-size:6.9px;line-height:12px;color:#cccccc;">CRLF</div>
<div class="s" style="left:985px;top:718.50px;font-size:6.9px;line-height:12px;color:#cccccc;">Python</div>
<div class="s" style="left:1014px;top:718.50px;font-size:6.9px;line-height:12px;color:#cccccc;">3.14.0 64-bit</div>
<div class="s" style="left:1061px;top:718.50px;font-size:6.9px;line-height:12px;color:#cccccc;">Pyrefly (error-off)</div>
<div class="s" style="left:1121px;top:718.50px;font-size:6.9px;line-height:12px;color:#cccccc;">Antigravity - Settings</div>
<div class="s" style="left:1047.9px;top:103.40px;font-size:6.9px;line-height:12px;color:#cccccc;letter-spacing:-0.37px">Developing Telegram Bot Project</div>
<svg class="i" style="left:1149.0px;top:105.4px;" width="8" height="8" viewBox="0 0 16 16"><path d="M8 2v12M2 8h12" fill="none" stroke="#c5c5c5" stroke-width="1.2" stroke-linecap="round" stroke-linejoin="round" /></svg>
<svg class="i" style="left:1162.25px;top:105.15px;" width="8.5" height="8.5" viewBox="0 0 16 16"><path d="M2.5 8a5.5 5.5 0 1 0 1.6-3.9M1.5 2v3.5H5M8 5v3.5l2.3 1.5" fill="none" stroke="#c5c5c5" stroke-width="1.2" stroke-linecap="round" stroke-linejoin="round" /></svg>
<div class="r" style="left:1176.8px;top:108.8px;width:1.3px;height:1.3px;border-radius:50%;background:#cccccc"></div>
<div class="r" style="left:1180.0px;top:108.8px;width:1.3px;height:1.3px;border-radius:50%;background:#cccccc"></div>
<div class="r" style="left:1183.2px;top:108.8px;width:1.3px;height:1.3px;border-radius:50%;background:#cccccc"></div>
<svg class="i" style="left:1189.5px;top:106.0px;" width="7" height="7" viewBox="0 0 16 16"><path d="M3 3l10 10M13 3L3 13" fill="none" stroke="#c5c5c5" stroke-width="1.5" stroke-linecap="round" stroke-linejoin="round" /></svg>
<svg class="i" style="left:1050.0px;top:128.3px;" width="8" height="8" viewBox="0 0 16 16"><path d="M3.5 1.5h6l3 3V14a.5.5 0 0 1-.5.5h-8.5a.5.5 0 0 1-.5-.5V2a.5.5 0 0 1 .5-.5z" fill="none" stroke="#aaaaaa" stroke-width="1.1" stroke-linecap="round" stroke-linejoin="round" /></svg>
<div class="s" style="left:1063.6px;top:126.50px;font-size:6.8px;line-height:12px;color:#d8d8d8;">Analyzed</div>
<svg class="i" style="left:1093.55px;top:127.55000000000001px;" width="9.5" height="9.5" viewBox="0 0 16 16"><path d="M6.8 1h2.4l.4 1.9 1.6.9 1.8-.7 1.2 2.1-1.4 1.3v1.9l1.4 1.3-1.2 2.1-1.8-.7-1.6.9L9.2 15H6.8l-.4-1.9-1.6-.9-1.8.7-1.2-2.1 1.4-1.3V7.6L1.8 6.3 3 4.2l1.8.7 1.6-.9z" fill="#8090b0"/><circle cx="8" cy="8" r="2.3" fill="#1a1a1a"/></svg>
<div class="s" style="left:1104px;top:126.50px;font-size:6.6px;line-height:12px;color:#e0e0e0;">.env</div>
<div class="s" style="left:1115.5px;top:126.50px;font-size:6.6px;line-height:12px;color:#a0a0a0;">#L1-17</div>
<div class="r" style="left:1050.8px;top:146.5px;width:140.4px;height:176.10000000000002px;background:#181818;border:1px solid #2a2a2a;border-radius:5px"></div>
<div class="r" style="left:1051.5px;top:294.4px;width:139px;height:0.8px;background:#2a2a2a;"></div>
<div class="r" style="left:1050.8px;top:351.2px;width:140.4px;height:165.09999999999997px;background:#181818;border:1px solid #2a2a2a;border-radius:5px"></div>
<div class="r" style="left:1051.5px;top:489.4px;width:139px;height:0.8px;background:#2a2a2a;"></div>
<div class="m" style="left:1055px;top:148.60px;font-size:6.72px;line-height:10px;color:#cccccc;-webkit-text-stroke:0.05px currentColor"><span style="color:#8b8b8b">…/abistep-lead-bot &gt; </span><span style="color:#d8d8d8">docker-c</span></div>
<div class="m" style="left:1055px;top:159.00px;font-size:6.72px;line-height:10px;color:#d8d8d8;-webkit-text-stroke:0.05px currentColor">ompose up -d --force-recreate</div>
<div class="m" style="left:1055px;top:169.00px;font-size:6.72px;line-height:10px;color:#d8d8d8;-webkit-text-stroke:0.05px currentColor">bot</div>
<div class="r" style="left:1175px;top:159px;width:11.5px;height:11.5px;background:#262626;border-radius:2px"></div>
<svg class="i" style="left:1176.7px;top:160.8px;" width="8" height="8" viewBox="0 0 16 16"><path d="M5.5 5.5h8v8h-8zM3 10.5H2.5v-8h8V3" fill="none" stroke="#9a9a9a" stroke-width="1.3" stroke-linecap="round" stroke-linejoin="round" /></svg>
<div class="m" style="left:1055px;top:179.90px;font-size:6.72px;line-height:10px;color:#cccccc;-webkit-text-stroke:0.05px currentColor">te</div>
<div class="m" style="left:1055px;top:190.60px;font-size:6.72px;line-height:10px;color:#cccccc;-webkit-text-stroke:0.05px currentColor"> Container abistep_bot  Recrea</div>
<div class="m" style="left:1055px;top:200.60px;font-size:6.72px;line-height:10px;color:#cccccc;-webkit-text-stroke:0.05px currentColor">ted</div>
<div class="m" style="left:1055px;top:210.50px;font-size:6.72px;line-height:10px;color:#cccccc;-webkit-text-stroke:0.05px currentColor"> Container abistep_redis  Wait</div>
<div class="m" style="left:1055px;top:220.70px;font-size:6.72px;line-height:10px;color:#cccccc;-webkit-text-stroke:0.05px currentColor">ing</div>
<div class="m" style="left:1055px;top:231.20px;font-size:6.72px;line-height:10px;color:#cccccc;-webkit-text-stroke:0.05px currentColor"> Container abistep_redis  Heal</div>
<div class="m" style="left:1055px;top:241.40px;font-size:6.72px;line-height:10px;color:#cccccc;-webkit-text-stroke:0.05px currentColor">thy</div>
<div class="m" style="left:1055px;top:251.50px;font-size:6.72px;line-height:10px;color:#cccccc;-webkit-text-stroke:0.05px currentColor"> Container abistep_bot  Starti</div>
<div class="m" style="left:1055px;top:261.70px;font-size:6.72px;line-height:10px;color:#cccccc;-webkit-text-stroke:0.05px currentColor">ng</div>
<div class="m" style="left:1055px;top:271.50px;font-size:6.72px;line-height:10px;color:#cccccc;-webkit-text-stroke:0.05px currentColor"> Container abistep_bot  Starte</div>
<div class="m" style="left:1055px;top:281.40px;font-size:6.72px;line-height:10px;color:#cccccc;-webkit-text-stroke:0.05px currentColor">d</div>
<svg class="i" style="left:1183.2px;top:183.0px;" width="7" height="7" viewBox="0 0 16 16"><path d="M2 12L8 4l6 8z" fill="#4a4a4a"/></svg>
<div class="r" style="left:1184.6px;top:242px;width:4.5px;height:42.30000000000001px;background:#3a3a3a;border-radius:2px"></div>
<svg class="i" style="left:1183.2px;top:286.0px;" width="7" height="7" viewBox="0 0 16 16"><path d="M2 4l6 8 6-8z" fill="#4a4a4a"/></svg>
<div class="s" style="left:1055px;top:303.40px;font-size:6.88px;line-height:12px;color:#a8a8a8;">Ran background ...</div>
<div class="s" style="left:1114.7px;top:303.40px;font-size:6.67px;line-height:12px;color:#6a6a6a;">Exit code 0</div>
<div class="s" style="left:1151.5px;top:298.30px;font-size:6.5px;line-height:12px;color:#a8a8a8;">Request</div>
<div class="s" style="left:1153.5px;top:308.30px;font-size:6.5px;line-height:12px;color:#a8a8a8;">Review</div>
<svg class="i" style="left:1180.0px;top:307.4px;" width="4" height="4" viewBox="0 0 16 16"><path d="M3 10l5-5l5 5" fill="none" stroke="#666" stroke-width="1.5" stroke-linecap="round" stroke-linejoin="round" /></svg>
<svg class="i" style="left:1050.0px;top:333.4px;" width="8" height="8" viewBox="0 0 16 16"><rect x="1.5" y="1.5" width="13" height="13" rx="1" fill="none" stroke="#888" stroke-width="1.1"/><path d="M4 5l3 3l-3 3" fill="none" stroke="#888" stroke-width="1.1"/></svg>
<div class="s" style="left:1063.3px;top:331.60px;font-size:6.68px;line-height:12px;color:#dadada;">Checked command status</div>
<div class="m" style="left:1055px;top:353.80px;font-size:6.72px;line-height:10px;color:#cccccc;-webkit-text-stroke:0.05px currentColor"><span style="color:#8b8b8b">…/abistep-lead-bot &gt; </span><span style="color:#d8d8d8">docker-c</span></div>
<div class="r" style="left:1175px;top:358.5px;width:11.5px;height:11.5px;background:#262626;border-radius:2px"></div>
<svg class="i" style="left:1176.7px;top:360.3px;" width="8" height="8" viewBox="0 0 16 16"><path d="M5.5 5.5h8v8h-8zM3 10.5H2.5v-8h8V3" fill="none" stroke="#9a9a9a" stroke-width="1.3" stroke-linecap="round" stroke-linejoin="round" /></svg>
<div class="m" style="left:1055px;top:363.80px;font-size:6.72px;line-height:10px;color:#d8d8d8;-webkit-text-stroke:0.05px currentColor">ompose logs --tail=20 bot</div>
<div class="m" style="left:1055px;top:374.90px;font-size:6.72px;line-height:10px;color:#cccccc;-webkit-text-stroke:0.05px currentColor">abistep_bot  | 2026-01-12 17:3</div>
<div class="m" style="left:1055px;top:384.90px;font-size:6.72px;line-height:10px;color:#cccccc;-webkit-text-stroke:0.05px currentColor">3:51,346 - root - INFO - Start</div>
<div class="m" style="left:1055px;top:395.00px;font-size:6.72px;line-height:10px;color:#cccccc;-webkit-text-stroke:0.05px currentColor">ing bot...</div>
<div class="m" style="left:1055px;top:405.50px;font-size:6.72px;line-height:10px;color:#cccccc;-webkit-text-stroke:0.05px currentColor">abistep_bot  | 2026-01-12 17:3</div>
<div class="m" style="left:1055px;top:415.50px;font-size:6.72px;line-height:10px;color:#cccccc;-webkit-text-stroke:0.05px currentColor">3:54,824 - aiogram.dispatcher</div>
<div class="m" style="left:1055px;top:425.50px;font-size:6.72px;line-height:10px;color:#cccccc;-webkit-text-stroke:0.05px currentColor">- INFO - Start polling</div>
<div class="m" style="left:1055px;top:435.70px;font-size:6.72px;line-height:10px;color:#cccccc;-webkit-text-stroke:0.05px currentColor">abistep_bot  | 2026-01-12 17:3</div>
<div class="m" style="left:1055px;top:445.60px;font-size:6.72px;line-height:10px;color:#cccccc;-webkit-text-stroke:0.05px currentColor">3:54,897 - aiogram.dispatcher</div>
<div class="m" style="left:1055px;top:455.70px;font-size:6.72px;line-height:10px;color:#cccccc;-webkit-text-stroke:0.05px currentColor">- INFO - Run polling for bot @</div>
<div class="m" style="left:1055px;top:465.70px;font-size:6.72px;line-height:10px;color:#cccccc;-webkit-text-stroke:0.05px currentColor">IlyaBel_bot id=7729452383 - &#x27;Б</div>
<div class="m" style="left:1055px;top:476.00px;font-size:6.72px;line-height:10px;color:#cccccc;-webkit-text-stroke:0.05px currentColor">от Ильи Белова&#x27;</div>
<svg class="i" style="left:1183.2px;top:377.0px;" width="7" height="7" viewBox="0 0 16 16"><path d="M2 12L8 4l6 8z" fill="#4a4a4a"/></svg>
<div class="r" style="left:1184.6px;top:426px;width:4.5px;height:52px;background:#3a3a3a;border-radius:2px"></div>
<svg class="i" style="left:1183.2px;top:481.0px;" width="7" height="7" viewBox="0 0 16 16"><path d="M2 4l6 8 6-8z" fill="#4a4a4a"/></svg>
<div class="s" style="left:1055px;top:497.30px;font-size:6.88px;line-height:12px;color:#a8a8a8;">Ran terminal c...</div>
<div class="s" style="left:1106px;top:497.30px;font-size:6.67px;line-height:12px;color:#6a6a6a;">Exit code 0</div>
<div class="s" style="left:1146px;top:492.30px;font-size:6.5px;line-height:12px;color:#a8a8a8;">Request</div>
<div class="s" style="left:1148px;top:502.60px;font-size:6.5px;line-height:12px;color:#a8a8a8;">Review</div>
<svg class="i" style="left:1179.0px;top:501.3px;" width="4" height="4" viewBox="0 0 16 16"><path d="M3 10l5-5l5 5" fill="none" stroke="#666" stroke-width="1.5" stroke-linecap="round" stroke-linejoin="round" /></svg>
<div class="s" style="left:1050px;top:523.80px;font-size:7.2px;line-height:12px;color:#d0d0d0;">Бот успешно запустился!</div>
<div class="s" style="left:1050px;top:535.40px;font-size:7.2px;line-height:12px;color:#d0d0d0;">Судя по логам, новая конфигурация</div>
<div class="s" style="left:1050px;top:546.80px;font-size:7.2px;line-height:12px;color:#d0d0d0;">применилась:</div>
<div class="r" style="left:1097.5px;top:547.5px;width:93.5px;height:10.5px;background:#262626;border-radius:2px"></div>
<div class="r" style="left:1050px;top:559.5px;width:141px;height:11px;background:#262626;border-radius:2px"></div>
<div class="r" style="left:1050px;top:571.5px;width:43px;height:11px;background:#262626;border-radius:2px"></div>
<div class="m" style="left:1101px;top:547.80px;font-size:6.18px;line-height:10px;color:#cccccc;-webkit-text-stroke:0.05px currentColor">INFO - Run polling for b</div>
<div class="m" style="left:1050px;top:560.00px;font-size:6.18px;line-height:10px;color:#cccccc;-webkit-text-stroke:0.05px currentColor">ot @IlyaBel_bot id=7729452383 - 'Бот И</div>
<div class="m" style="left:1050px;top:572.00px;font-size:6.18px;line-height:10px;color:#cccccc;-webkit-text-stroke:0.05px currentColor">льи Белова'</div>
<div class="s" style="left:1050px;top:582.60px;font-size:7.2px;line-height:12px;color:#d0d0d0;">Теперь можете проверять работу в</div>
<div class="s" style="left:1050px;top:594.00px;font-size:7.2px;line-height:12px;color:#d0d0d0;">Telegram (напишите</div>
<div class="r" style="left:1119px;top:594.5px;width:27px;height:11px;background:#262626;border-radius:2px"></div>
<div class="m" style="left:1122.5px;top:595.00px;font-size:6.18px;line-height:10px;color:#cccccc;-webkit-text-stroke:0.05px currentColor">/start</div>
<div class="s" style="left:1148.5px;top:594.00px;font-size:7.2px;line-height:12px;color:#d0d0d0;">боту).</div>
<div class="s" style="left:1137px;top:611.50px;font-size:6.6px;line-height:12px;color:#cccccc;">Good</div>
<svg class="i" style="left:1155.75px;top:613.05px;" width="8.5" height="8.5" viewBox="0 0 16 16"><path d="M2 7h2.5v7H2zM4.5 7.5L7.5 2c1.3 0 1.8 1 1.5 2.5L8.5 6.5h4.5c1 0 1.5.8 1.3 1.7l-1 4.8c-.2.7-.8 1-1.5 1H4.5" fill="none" stroke="#cccccc" stroke-width="1.2" stroke-linecap="round" stroke-linejoin="round" /></svg>
<div class="s" style="left:1169px;top:611.50px;font-size:6.3px;line-height:12px;color:#5a5a5a;">Bad</div>
<svg class="i" style="left:1182.75px;top:613.55px;" width="8.5" height="8.5" viewBox="0 0 16 16"><path d="M2 9h2.5V2H2zM4.5 8.5L7.5 14c1.3 0 1.8-1 1.5-2.5L8.5 9.5h4.5c1 0 1.5-.8 1.3-1.7l-1-4.8c-.2-.7-.8-1-1.5-1H4.5" fill="none" stroke="#5a5a5a" stroke-width="1.2" stroke-linecap="round" stroke-linejoin="round" /></svg>
<div class="r" style="left:1199.6px;top:120px;width:7.6px;height:538px;background:#1e1e1e;"></div>
<svg class="i" style="left:1200.9px;top:121.0px;" width="7" height="7" viewBox="0 0 16 16"><path d="M2 12L8 4l6 8z" fill="#4a4a4a"/></svg>
<svg class="i" style="left:1200.9px;top:650.3px;" width="7" height="7" viewBox="0 0 16 16"><path d="M2 4l6 8 6-8z" fill="#4a4a4a"/></svg>
<div class="r" style="left:1202.2px;top:622.2px;width:4.5px;height:25.6px;background:#3c3c3c;border-radius:2px"></div>
<svg class="i" style="left:1049.0px;top:663.0px;" width="7" height="7" viewBox="0 0 16 16"><path d="M14 8H2M7 3L2 8l5 5" fill="none" stroke="#777" stroke-width="1.3" stroke-linecap="round" stroke-linejoin="round" /></svg>
<svg class="i" style="left:1057.5px;top:662.0px;" width="9" height="9" viewBox="0 0 16 16"><path d="M3.5 1.5h6l3 3V14a.5.5 0 0 1-.5.5h-8.5a.5.5 0 0 1-.5-.5V2a.5.5 0 0 1 .5-.5z" fill="none" stroke="#999" stroke-width="1.1" stroke-linecap="round" stroke-linejoin="round" /></svg>
<div class="s" style="left:1072.3px;top:660.60px;font-size:6.5px;line-height:12px;color:#cccccc;">0 Files With Chan...</div>
<div class="r" style="left:1133.4px;top:660px;width:63.4px;height:13px;background:#1e1e1e;border-radius:3px"></div>
<svg class="i" style="left:1136.0px;top:662.5px;" width="8" height="8" viewBox="0 0 16 16"><path d="M6 3h8M6 8h8M6 13h8M2 3h1M2 8h1M2 13h1" fill="none" stroke="#999" stroke-width="1.2" stroke-linecap="round" stroke-linejoin="round" /></svg>
<div class="s" style="left:1147.7px;top:660.60px;font-size:6.8px;line-height:12px;color:#cccccc;letter-spacing:-0.4px">Review Changes</div>
<div class="r" style="left:1045.2px;top:674.7px;width:158.5px;height:37.7px;background:#1f1f1f;border:1px solid #2e2e2e;border-radius:6px"></div>
<div class="s" style="left:1053.5px;top:681.30px;font-size:6.85px;line-height:12px;color:#8a8a8a;">Ask anything (Ctrl+L), @ to mention, / for workfl</div>
<svg class="i" style="left:1052.0px;top:699.7px;" width="8" height="8" viewBox="0 0 16 16"><path d="M8 2v12M2 8h12" fill="none" stroke="#666" stroke-width="1.3" stroke-linecap="round" stroke-linejoin="round" /></svg>
<svg class="i" style="left:1068.0px;top:701.0px;" width="5" height="5" viewBox="0 0 16 16"><path d="M3 10l5-5l5 5" fill="none" stroke="#888" stroke-width="1.8" stroke-linecap="round" stroke-linejoin="round" /></svg>
<div class="s" style="left:1076.5px;top:697.70px;font-size:6.3px;line-height:12px;color:#a8a8a8;letter-spacing:-0.4px">Fast</div>
<svg class="i" style="left:1096.5px;top:701.0px;" width="5" height="5" viewBox="0 0 16 16"><path d="M3 10l5-5l5 5" fill="none" stroke="#888" stroke-width="1.8" stroke-linecap="round" stroke-linejoin="round" /></svg>
<div class="s" style="left:1105px;top:697.70px;font-size:6.8px;line-height:12px;color:#a8a8a8;letter-spacing:-0.3px">Gemini 3 Pro (High)</div>
<svg class="i" style="left:1174.0px;top:699.7px;" width="8" height="8" viewBox="0 0 16 16"><path d="M8 1.5a2.5 2.5 0 0 1 2.5 2.5v4a2.5 2.5 0 0 1-5 0V4A2.5 2.5 0 0 1 8 1.5zM3.5 8a4.5 4.5 0 0 0 9 0M8 12.5v2" fill="none" stroke="#999" stroke-width="1.2" stroke-linecap="round" stroke-linejoin="round" /></svg>
<div class="r" style="left:1186.8px;top:697.2px;width:13.2px;height:13.2px;border-radius:50%;background:#333333"></div>
<svg class="i" style="left:1189.9px;top:700.3px;" width="7" height="7" viewBox="0 0 16 16"><path d="M2 8h12M9 3l5 5l-5 5" fill="none" stroke="#9a9a9a" stroke-width="1.5" stroke-linecap="round" stroke-linejoin="round" /></svg>
</div>
<div class="m" style="left:41.5px;top:738.3px;font-size:33.6px;line-height:40px;font-weight:bold;color:#fff;transform-origin:0 0;transform:scale(1.01,1.13);-webkit-text-stroke:0.7px #fff">ABISTEP</div>
</body></html>
